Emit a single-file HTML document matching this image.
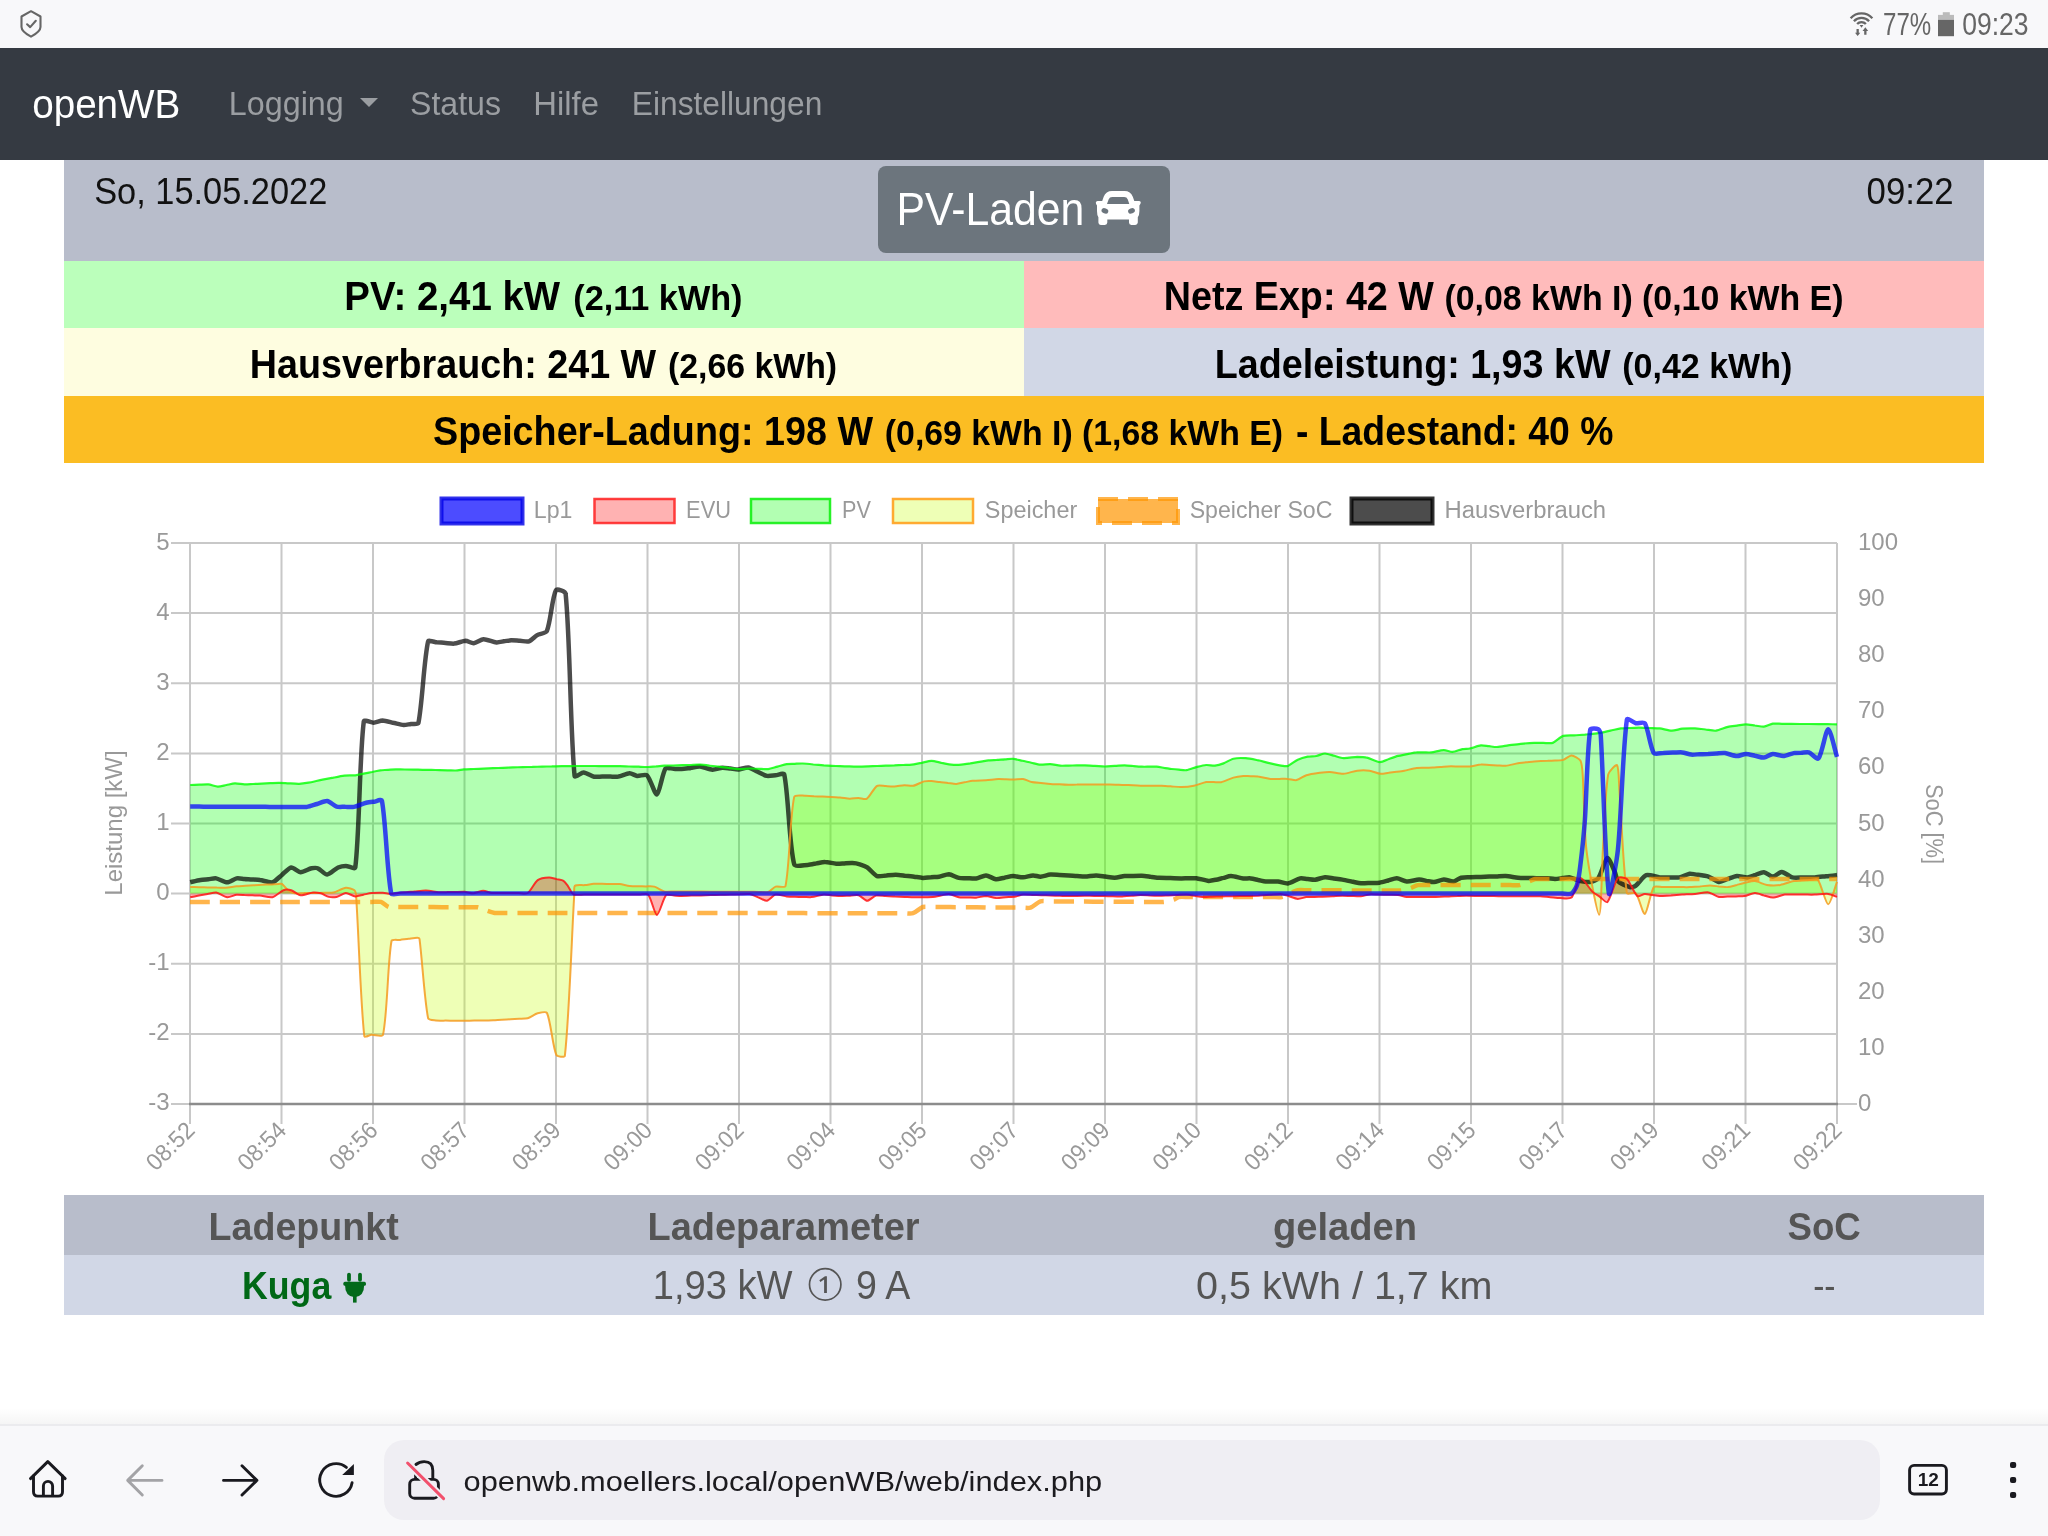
<!DOCTYPE html>
<html><head><meta charset="utf-8">
<style>
html,body{margin:0;padding:0;width:2048px;height:1536px;overflow:hidden;background:#fff;font-family:"Liberation Sans",sans-serif;}
.abs{position:absolute;}
#status{left:0;top:0;width:2048px;height:48px;background:#f8f8fa;}
#nav{left:0;top:48px;width:2048px;height:112px;background:#353a42;}
.t{position:absolute;white-space:nowrap;line-height:1;}
#hdr{left:64px;top:160px;width:1920px;height:101px;background:#b8bdcb;}
#btn{left:878px;top:166px;width:292px;height:87px;background:#6c757d;border-radius:8px;}
.row{position:absolute;height:67px;}
#bottom{left:0;top:1424px;width:2048px;height:110px;background:#f8f8fa;border-top:2px solid #ebebee;}
#shadow{left:0;top:1408px;width:2048px;height:16px;background:linear-gradient(rgba(0,0,0,0),rgba(0,0,0,0.04));}
#url{left:384px;top:1440px;width:1496px;height:80px;background:#efeef3;border-radius:20px;}
</style></head>
<body>
<div id="status" class="abs"></div>
<div id="nav" class="abs"></div>
<div id="hdr" class="abs"></div>
<div id="btn" class="abs"></div>
<div class="row" style="left:64px;top:261px;width:960px;background:#bbffbb"></div>
<div class="row" style="left:1024px;top:261px;width:960px;background:#ffbbbb"></div>
<div class="row" style="left:64px;top:328px;width:960px;height:68px;background:#fefde0"></div>
<div class="row" style="left:1024px;top:328px;width:960px;height:68px;background:#d1d7e6"></div>
<div class="row" style="left:64px;top:396px;width:1920px;background:#fbbd23"></div>
<div class="row" style="left:64px;top:1195px;width:1920px;height:60px;background:#b8bdcb"></div>
<div class="row" style="left:64px;top:1255px;width:1920px;height:60px;background:#d1d7e6"></div>
<div id="shadow" class="abs"></div><div id="bottom" class="abs"></div>
<div id="url" class="abs"></div>
<svg class="abs" style="left:0;top:0;will-change:transform" width="2048" height="1536" font-family="Liberation Sans"><text transform="translate(1883.02 34.9) scale(0.7808 1)" font-size="30.86" font-weight="400" fill="#666">77%</text>
<text transform="translate(1962.14 34.9) scale(0.8593 1)" font-size="30.86" font-weight="400" fill="#666">09:23</text>
<text transform="translate(32.23 118.2) scale(0.9652 1)" font-size="40.0" font-weight="400" fill="#fff">openWB</text>
<text transform="translate(228.87 115.3) scale(0.9656 1)" font-size="33.43" font-weight="400" fill="#9b9ea2">Logging</text>
<text transform="translate(410.04 115.3) scale(0.9598 1)" font-size="33.43" font-weight="400" fill="#9b9ea2">Status</text>
<text transform="translate(533.23 115.3) scale(0.9833 1)" font-size="33.43" font-weight="400" fill="#9b9ea2">Hilfe</text>
<text transform="translate(631.85 115.3) scale(0.9491 1)" font-size="33.43" font-weight="400" fill="#9b9ea2">Einstellungen</text>
<text transform="translate(94.15 204.1) scale(0.9474 1)" font-size="36.29" font-weight="400" fill="#111">So, 15.05.2022</text>
<text transform="translate(1866.54 204.0) scale(0.9592 1)" font-size="36.29" font-weight="400" fill="#111">09:22</text>
<text transform="translate(896.51 225.0) scale(0.9299 1)" font-size="46.0" font-weight="400" fill="#fff">PV-Laden</text>
<text transform="translate(344.37 310) scale(0.9409 1)" font-size="40.86" font-weight="700" fill="#000">PV: 2,41 kW</text>
<text transform="translate(573.24 310) scale(0.9588 1)" font-size="35.71" font-weight="700" fill="#000">(2,11 kWh)</text>
<text transform="translate(1163.76 310) scale(0.9224 1)" font-size="40.86" font-weight="700" fill="#000">Netz Exp: 42 W</text>
<text transform="translate(1444.45 310) scale(0.9489 1)" font-size="35.71" font-weight="700" fill="#000">(0,08 kWh I) (0,10 kWh E)</text>
<text transform="translate(249.86 378) scale(0.9224 1)" font-size="40.86" font-weight="700" fill="#000">Hausverbrauch: 241 W</text>
<text transform="translate(668.05 378) scale(0.9467 1)" font-size="35.71" font-weight="700" fill="#000">(2,66 kWh)</text>
<text transform="translate(1214.76 378) scale(0.9224 1)" font-size="40.86" font-weight="700" fill="#000">Ladeleistung: 1,93 kW</text>
<text transform="translate(1622.25 378) scale(0.9521 1)" font-size="35.71" font-weight="700" fill="#000">(0,42 kWh)</text>
<text transform="translate(432.98 445) scale(0.9231 1)" font-size="40.86" font-weight="700" fill="#000">Speicher-Ladung: 198 W</text>
<text transform="translate(884.85 445) scale(0.9467 1)" font-size="35.71" font-weight="700" fill="#000">(0,69 kWh I) (1,68 kWh E)</text>
<text transform="translate(1295.99 445) scale(0.9143 1)" font-size="40.86" font-weight="700" fill="#000">- Ladestand: 40 %</text>
<text transform="translate(533.85 517.9) scale(0.9536 1)" font-size="24.29" font-weight="400" fill="#999">Lp1</text>
<text transform="translate(686.10 517.9) scale(0.8989 1)" font-size="24.29" font-weight="400" fill="#999">EVU</text>
<text transform="translate(842.11 517.9) scale(0.8914 1)" font-size="24.29" font-weight="400" fill="#999">PV</text>
<text transform="translate(984.84 517.9) scale(0.9636 1)" font-size="24.29" font-weight="400" fill="#999">Speicher</text>
<text transform="translate(1189.65 517.9) scale(0.9529 1)" font-size="24.29" font-weight="400" fill="#999">Speicher SoC</text>
<text transform="translate(1444.52 517.9) scale(0.9812 1)" font-size="24.29" font-weight="400" fill="#999">Hausverbrauch</text>
<text transform="translate(208.50 1239.5) scale(0.9481 1)" font-size="39.71" font-weight="700" fill="#555">Ladepunkt</text>
<text transform="translate(647.49 1239.5) scale(0.9560 1)" font-size="39.71" font-weight="700" fill="#555">Ladeparameter</text>
<text transform="translate(1273.04 1239.5) scale(0.9593 1)" font-size="39.71" font-weight="700" fill="#555">geladen</text>
<text transform="translate(1787.48 1239.5) scale(0.9237 1)" font-size="39.71" font-weight="700" fill="#555">SoC</text>
<text transform="translate(242.00 1299) scale(0.8994 1)" font-size="39.71" font-weight="700" fill="#006816">Kuga</text>
<text transform="translate(652.83 1298.8) scale(0.9562 1)" font-size="39.86" font-weight="400" fill="#555">1,93 kW</text>
<text transform="translate(856.06 1298.8) scale(0.9419 1)" font-size="39.86" font-weight="400" fill="#555">9 A</text>
<text transform="translate(1196.00 1299) scale(0.9953 1)" font-size="39.71" font-weight="400" fill="#555">0,5 kWh / 1,7 km</text>
<text transform="translate(1813.15 1299) scale(0.8464 1)" font-size="39.71" font-weight="400" fill="#555">--</text>
<text transform="translate(463.58 1490.9) scale(1.1233 1)" font-size="27.43" font-weight="400" fill="#1c1b1f">openwb.moellers.local/openWB/web/index.php</text>
<g fill="none" stroke="#666" stroke-width="2.1" stroke-linejoin="round" stroke-linecap="round">
<path d="M31 11.2 L21.5 16.5 V27 Q21.5 31.5 31 36.7 Q40.5 31.5 40.5 27 V16.5 Z"/>
<path d="M27.1 24.3 L30.2 27.1 L35.8 20.8"/>
</g>
<g fill="none" stroke="#666" stroke-width="2.3" stroke-linecap="butt">
<path d="M1850.65 18.23 A14.6 14.6 0 0 1 1872.35 18.23"/><path d="M1853.92 21.17 A10.2 10.2 0 0 1 1869.08 21.17"/><path d="M1857.12 24.05 A5.9 5.9 0 0 1 1865.88 24.05"/>
</g>
<g fill="#666">
<path d="M1859.6 25 L1863.4 25 L1861.5 27.8 Z"/>
<path d="M1856.5 29 H1858.8 V32.8 H1860.3 L1857.65 36 L1855 32.8 H1856.5 Z"/>
<path d="M1864.2 34.8 H1866.5 V31 H1868.2 L1865.35 27.2 L1862.5 31 H1864.2 Z"/>
<rect x="1942.8" y="12.2" width="7" height="3" fill="#bbb"/>
<rect x="1938" y="14.9" width="16" height="4.9" fill="#bbb"/>
<rect x="1938" y="19.8" width="16" height="16.4"/>
</g>
<path d="M360 98 H378 L369 107 Z" fill="#9b9ea2"/>
<path fill="#fff" fill-rule="evenodd" d="M1097 205.5 Q1095.8 204.3 1095.8 202.6 Q1096 201 1097.6 201 L1102.2 201 L1103.7 196.8 Q1105.9 191 1112 191 L1124.5 191 Q1130.6 191 1132.8 196.8 L1134.3 201 L1139.2 201 Q1140.8 201 1140.8 202.6 Q1140.6 204.3 1139.4 205.5 Q1139.4 207.5 1139.4 211 Q1139.4 215.3 1137.8 217.3 L1137.8 222.6 Q1137.6 225 1135.2 225 L1131.4 225 Q1129 225 1129 222.6 L1129 219.4 L1107.3 219.4 L1107.3 222.6 Q1107.2 225 1104.8 225 L1100.8 225 Q1098.4 225 1098.4 222.6 L1098.4 217.3 Q1097 215.3 1097 211 Q1097 207.5 1097 205.5 Z M1107 203.9 L1108.6 199.5 Q1109.6 197.1 1112.2 197.1 L1124.2 197.1 Q1126.8 197.1 1127.8 199.5 L1129.3 203.9 Z"/>
<ellipse cx="1104.9" cy="210.9" rx="3.5" ry="2.6" transform="rotate(22 1104.9 210.9)" fill="#6c757d"/>
<ellipse cx="1131.5" cy="210.9" rx="3.5" ry="2.6" transform="rotate(-22 1131.5 210.9)" fill="#6c757d"/>
<g fill="#036a1a">
<rect x="347.1" y="1272.7" width="3.8" height="9" rx="1.9"/>
<rect x="358.1" y="1272.7" width="3.8" height="9" rx="1.9"/>
<rect x="343.4" y="1281.8" width="22.5" height="4" rx="1.5"/>
<path d="M345 1285 H364.2 Q364.2 1296.5 354.6 1297.2 Q345 1296.5 345 1285 Z"/>
<rect x="353" y="1295" width="3.6" height="7.6"/>
</g>
<g fill="none" stroke="#555" stroke-width="1.7"><circle cx="825.2" cy="1284.4" r="15.7"/></g>
<path d="M819.3 1280.2 L825 1276.3 H826.9 V1293.1 H824.1 V1279.6 L820.4 1282 Z" fill="#555"/>
<g fill="none" stroke="#1a1a1f" stroke-width="2.9" stroke-linejoin="round" stroke-linecap="round">
<path d="M30.5 1478.6 L47.8 1461.6 L65.2 1478.6"/>
<path d="M33.5 1476 V1491.8 Q33.5 1496.1 37.8 1496.1 H58.2 Q62.5 1496.1 62.5 1491.8 V1476"/>
<path d="M43.4 1496 V1486 A4.6 4.6 0 0 1 52.6 1486 V1496" stroke-linecap="butt"/>
<path d="M256.9 1480.4 H223.5 M242 1465.8 L256.9 1480.4 L242 1495"/>
<path d="M346.4 1467.4 A16.3 16.3 0 1 0 352.1 1482.7"/>
<path d="M415.9 1464.5 Q419.5 1461.6 424.2 1461.6 Q432.8 1461.6 432.8 1470.5 V1478.5"/>
<path d="M415.6 1472.3 V1478.5"/>
<rect x="409.7" y="1479.4" width="28.7" height="18.8" rx="4.8"/>
<rect x="1909.6" y="1465.4" width="36.8" height="28.6" rx="4.5"/>
</g>
<path d="M162 1480.4 H128.6 M142.3 1465.8 L127.7 1480.4 L142.3 1495" fill="none" stroke="#a3a3a6" stroke-width="2.9" stroke-linejoin="round" stroke-linecap="round"/>
<path d="M342.2 1475.1 L353.9 1464.1 V1475.1 Z" fill="#1a1a1f"/>
<path d="M405 1460.5 L446.5 1501.2" stroke="#efeef3" stroke-width="7"/>
<path d="M407.6 1463 L443.6 1498.6" stroke="#f2506c" stroke-width="3" stroke-linecap="round"/>
<text x="1928.2" y="1485.9" font-size="19" font-weight="700" fill="#1a1a1f" text-anchor="middle">12</text>
<g fill="#1a1a1f">
<rect x="2010" y="1462" width="6.2" height="6" rx="2"/>
<rect x="2010" y="1477" width="6.2" height="6" rx="2"/>
<rect x="2010" y="1492" width="6.2" height="6" rx="2"/>
</g>
</svg>
<svg class="abs" style="left:0;top:0;will-change:transform" width="2048" height="1536" font-family="Liberation Sans"><g stroke="#c8c8c8" stroke-width="2"><line x1="171" y1="543.00" x2="1837" y2="543.00"/><line x1="171" y1="613.12" x2="1837" y2="613.12"/><line x1="171" y1="683.25" x2="1837" y2="683.25"/><line x1="171" y1="753.38" x2="1837" y2="753.38"/><line x1="171" y1="823.50" x2="1837" y2="823.50"/><line x1="171" y1="893.62" x2="1837" y2="893.62"/><line x1="171" y1="963.75" x2="1837" y2="963.75"/><line x1="171" y1="1033.88" x2="1837" y2="1033.88"/><line x1="190.0" y1="543" x2="190.0" y2="1124"/><line x1="281.5" y1="543" x2="281.5" y2="1124"/><line x1="373.0" y1="543" x2="373.0" y2="1124"/><line x1="464.5" y1="543" x2="464.5" y2="1124"/><line x1="556.0" y1="543" x2="556.0" y2="1124"/><line x1="647.5" y1="543" x2="647.5" y2="1124"/><line x1="739.0" y1="543" x2="739.0" y2="1124"/><line x1="830.5" y1="543" x2="830.5" y2="1124"/><line x1="922.0" y1="543" x2="922.0" y2="1124"/><line x1="1013.5" y1="543" x2="1013.5" y2="1124"/><line x1="1105.0" y1="543" x2="1105.0" y2="1124"/><line x1="1196.5" y1="543" x2="1196.5" y2="1124"/><line x1="1288.0" y1="543" x2="1288.0" y2="1124"/><line x1="1379.5" y1="543" x2="1379.5" y2="1124"/><line x1="1471.0" y1="543" x2="1471.0" y2="1124"/><line x1="1562.5" y1="543" x2="1562.5" y2="1124"/><line x1="1654.0" y1="543" x2="1654.0" y2="1124"/><line x1="1745.5" y1="543" x2="1745.5" y2="1124"/><line x1="1837.0" y1="543" x2="1837.0" y2="1124"/><line x1="171" y1="1104" x2="190" y2="1104"/><line x1="1837" y1="1104" x2="1857" y2="1104"/></g>
<path d="M190.2 887.0 C192.4 887.0 196.8 887.2 199.0 887.2 C201.3 887.2 205.7 887.4 207.9 887.4 C210.1 887.4 214.5 887.5 216.8 887.6 C219.0 887.6 223.4 887.9 225.6 887.8 C228.4 887.6 233.8 886.5 236.6 886.2 C238.7 886.0 242.9 885.9 245.0 885.8 C247.1 885.7 251.4 885.4 253.5 885.3 C255.6 885.2 259.8 885.0 261.9 884.8 C264.0 884.7 268.2 884.5 270.3 884.4 C272.4 884.3 276.6 884.0 278.8 883.9 C279.5 883.9 281.3 883.5 281.9 883.9 C283.6 885.1 286.4 888.9 288.1 890.2 C289.5 891.2 292.7 893.0 294.4 893.3 C296.7 893.7 301.7 893.1 304.1 893.1 C306.6 893.0 311.5 892.9 313.9 892.9 C316.3 892.9 321.2 892.8 323.6 892.7 C326.1 892.7 331.1 893.0 333.4 892.5 C336.6 891.8 342.7 888.1 345.9 887.8 C348.0 887.6 352.9 889.0 354.5 890.2 C355.5 891.0 356.0 894.2 356.1 895.6 C358.5 930.7 360.6 1003.1 364.3 1036.2 C364.5 1037.9 369.7 1034.9 371.5 1034.8 C374.4 1034.6 382.5 1037.4 383.0 1034.8 C387.5 1013.9 387.6 962.7 391.5 941.0 C391.9 939.0 397.9 940.2 400.1 939.9 C402.2 939.6 406.6 939.1 408.7 938.8 C410.9 938.5 415.2 937.7 417.3 937.7 C417.9 937.7 419.4 938.2 419.5 938.8 C422.1 958.3 424.4 999.8 428.1 1018.3 C428.5 1020.2 434.0 1020.2 436.0 1020.5 C438.3 1020.8 443.2 1020.6 445.5 1020.6 C447.9 1020.6 452.7 1020.7 455.1 1020.7 C457.4 1020.7 462.2 1020.8 464.6 1020.8 C467.0 1020.8 471.8 1020.6 474.2 1020.6 C476.6 1020.6 481.3 1020.4 483.7 1020.4 C486.1 1020.4 490.9 1020.3 493.3 1020.2 C495.5 1020.1 499.8 1019.8 501.9 1019.7 C504.1 1019.6 508.4 1019.4 510.5 1019.2 C512.6 1019.1 517.0 1018.9 519.1 1018.8 C521.2 1018.7 525.7 1018.9 527.7 1018.3 C530.3 1017.5 535.1 1014.0 537.7 1013.3 C539.9 1012.7 546.2 1011.1 547.0 1013.0 C550.8 1021.5 552.6 1046.0 556.3 1054.9 C557.0 1056.7 564.7 1057.6 564.9 1055.6 C569.1 1017.9 571.8 935.7 574.2 895.8 C574.3 893.3 573.6 887.1 574.9 885.8 C576.3 884.5 582.5 885.4 585.0 885.1 C587.2 884.9 591.4 883.9 593.6 883.7 C595.8 883.5 600.1 883.8 602.3 883.8 C604.5 883.9 608.8 883.9 611.0 884.0 C613.2 884.0 617.5 883.9 619.7 884.1 C622.2 884.4 627.1 885.7 629.6 886.0 C631.6 886.2 635.8 886.2 637.9 886.2 C639.9 886.2 644.1 886.4 646.1 886.4 C648.2 886.4 652.5 886.1 654.4 886.6 C657.0 887.3 661.7 890.8 664.3 891.5 C666.5 892.1 671.4 891.5 673.7 891.5 C676.1 891.5 680.8 891.6 683.2 891.6 C685.6 891.6 690.3 891.6 692.6 891.6 C695.0 891.6 699.7 891.6 702.1 891.6 C704.4 891.7 709.2 891.7 711.5 891.7 C713.9 891.7 718.6 891.7 721.0 891.7 C723.3 891.7 728.1 891.7 730.4 891.8 C732.8 891.8 737.5 891.8 739.9 891.8 C742.2 891.8 746.9 891.8 749.3 891.8 C751.7 891.8 756.4 891.9 758.8 891.9 C761.1 891.9 766.1 892.6 768.2 891.9 C770.3 891.3 773.5 887.3 775.6 886.6 C777.9 885.8 785.0 888.2 785.5 886.0 C789.7 865.8 789.8 817.0 794.2 796.9 C794.7 794.4 802.5 795.8 805.3 795.7 C807.5 795.6 811.8 796.0 814.0 796.2 C816.1 796.3 820.5 796.5 822.6 796.6 C824.8 796.7 829.2 796.9 831.3 797.0 C833.5 797.2 837.8 797.3 840.0 797.5 C842.5 797.7 847.4 798.7 849.9 798.8 C852.1 798.8 856.4 797.9 858.6 797.9 C860.6 797.9 865.1 799.8 866.6 798.8 C869.7 796.8 873.9 787.9 877.1 785.8 C878.7 784.7 883.6 786.0 885.8 786.1 C887.9 786.2 892.2 786.5 894.4 786.4 C896.9 786.3 901.8 785.3 904.3 785.2 C906.5 785.1 910.9 786.2 913.0 785.8 C915.9 785.3 921.2 782.1 924.1 781.4 C925.9 781.0 929.7 781.0 931.5 781.1 C933.6 781.2 937.7 781.8 939.8 782.0 C941.8 782.3 946.0 782.7 948.0 783.0 C950.1 783.2 954.2 784.0 956.3 783.9 C958.3 783.8 962.3 782.7 964.3 782.3 C966.4 782.0 970.4 781.0 972.4 780.8 C975.8 780.5 982.6 780.4 986.0 780.2 C989.1 780.0 995.2 779.1 998.3 779.0 C1000.2 778.9 1003.9 779.2 1005.8 779.3 C1007.6 779.4 1011.3 779.6 1013.2 779.6 C1015.7 779.6 1020.7 778.7 1023.1 779.0 C1025.3 779.3 1029.5 781.6 1031.7 782.1 C1034.0 782.6 1038.7 782.8 1041.0 783.0 C1043.3 783.2 1048.0 783.7 1050.3 783.9 C1052.6 784.1 1057.2 784.2 1059.5 784.3 C1061.9 784.5 1066.5 784.8 1068.8 784.8 C1070.8 784.8 1074.9 784.6 1076.9 784.6 C1078.9 784.5 1083.0 784.4 1085.0 784.4 C1087.1 784.4 1091.2 784.4 1093.2 784.4 C1095.3 784.4 1099.4 784.4 1101.5 784.4 C1103.5 784.4 1107.6 784.4 1109.7 784.4 C1112.0 784.4 1116.7 784.6 1119.0 784.7 C1121.3 784.8 1126.0 785.0 1128.3 785.0 C1130.6 785.1 1135.3 785.3 1137.6 785.4 C1139.9 785.5 1144.6 785.7 1146.9 785.7 C1148.7 785.7 1152.5 785.7 1154.3 785.7 C1156.2 785.7 1159.9 785.6 1161.7 785.7 C1164.2 785.8 1169.1 786.2 1171.6 786.4 C1174.1 786.6 1179.0 787.2 1181.5 787.1 C1184.6 787.0 1190.9 786.3 1193.9 785.7 C1197.0 785.1 1203.1 782.6 1206.2 782.0 C1208.0 781.7 1211.8 782.1 1213.7 782.1 C1215.5 782.1 1219.3 782.6 1221.1 782.2 C1224.3 781.5 1230.3 778.5 1233.4 777.6 C1235.8 776.9 1240.8 776.2 1243.3 776.0 C1245.1 775.9 1248.9 776.2 1250.8 776.2 C1252.6 776.2 1256.4 776.1 1258.2 776.4 C1261.3 776.8 1267.4 778.5 1270.5 778.9 C1272.6 779.2 1277.0 778.9 1279.2 778.9 C1281.4 778.9 1285.7 778.7 1287.9 778.9 C1290.1 779.0 1294.5 780.5 1296.5 780.1 C1299.1 779.6 1303.8 776.0 1306.4 775.2 C1309.7 774.2 1316.6 773.2 1320.0 772.7 C1322.5 772.4 1327.5 771.9 1330.0 772.0 C1333.4 772.2 1340.2 774.0 1343.6 773.8 C1347.0 773.6 1353.8 771.1 1357.2 770.7 C1360.3 770.3 1366.6 770.3 1369.6 770.7 C1372.4 771.1 1377.9 773.5 1380.7 773.8 C1382.6 774.0 1386.6 773.0 1388.5 772.8 C1390.5 772.5 1394.4 772.0 1396.4 771.7 C1398.3 771.5 1402.3 771.1 1404.2 770.7 C1407.3 770.1 1413.5 768.4 1416.6 768.0 C1418.6 767.7 1422.6 767.8 1424.7 767.8 C1426.7 767.8 1430.7 767.7 1432.7 767.6 C1434.6 767.5 1438.2 767.1 1440.1 767.0 C1441.9 766.9 1445.6 766.5 1447.5 766.4 C1450.3 766.3 1455.9 766.4 1458.7 766.4 C1461.4 766.4 1467.0 766.6 1469.8 766.4 C1472.6 766.2 1478.1 764.7 1480.9 764.5 C1483.0 764.3 1487.1 764.8 1489.2 764.9 C1491.2 765.0 1495.4 765.3 1497.4 765.4 C1499.5 765.5 1503.7 766.0 1505.7 765.8 C1508.8 765.5 1514.9 763.8 1518.0 763.3 C1520.0 763.0 1524.0 762.6 1526.0 762.3 C1528.1 762.1 1532.1 761.5 1534.1 761.4 C1537.5 761.2 1544.3 760.9 1547.7 760.8 C1549.5 760.7 1553.2 760.7 1555.0 760.6 C1557.1 760.5 1561.3 760.5 1563.2 759.9 C1565.4 759.2 1569.4 755.3 1571.5 755.4 C1573.7 755.5 1579.2 758.6 1580.4 760.6 C1582.0 763.4 1582.5 771.3 1582.7 774.9 C1584.0 793.6 1584.2 831.2 1586.4 849.7 C1588.3 866.1 1597.1 914.8 1599.2 914.8 C1601.2 914.8 1601.9 866.0 1602.9 849.7 C1604.1 831.0 1605.1 792.9 1608.1 774.9 C1608.6 771.7 1616.1 763.8 1617.1 765.1 C1618.9 767.5 1618.9 783.6 1619.4 789.8 C1621.4 815.6 1623.1 869.3 1626.9 893.1 C1627.2 895.1 1634.5 891.6 1635.8 893.1 C1639.0 896.9 1642.8 914.8 1644.8 914.1 C1647.3 913.3 1650.4 892.2 1653.8 887.1 C1654.9 885.5 1660.5 887.1 1662.8 887.1 C1665.0 887.1 1669.5 887.1 1671.8 887.1 C1674.0 887.1 1678.5 887.1 1680.7 887.1 C1683.0 887.1 1687.5 887.2 1689.7 887.1 C1692.2 887.0 1697.3 886.5 1699.8 886.4 C1702.4 886.2 1707.5 885.6 1710.0 885.6 C1712.2 885.6 1716.7 886.2 1719.0 886.4 C1721.2 886.5 1725.7 887.3 1727.9 887.1 C1730.2 886.9 1734.7 885.4 1736.9 884.9 C1739.2 884.3 1743.6 883.1 1745.9 882.6 C1748.1 882.1 1752.7 880.9 1754.9 881.1 C1757.9 881.4 1763.8 884.4 1766.9 884.9 C1770.2 885.4 1777.0 885.4 1780.3 884.9 C1783.7 884.4 1790.4 881.8 1793.8 881.1 C1795.8 880.7 1799.8 880.7 1801.8 880.6 C1803.8 880.5 1807.8 880.2 1809.8 880.1 C1811.8 880.0 1816.7 878.2 1817.8 879.6 C1821.3 884.3 1825.7 904.0 1828.2 904.3 C1830.5 904.6 1834.8 887.5 1837.0 881.9 L1837.0 893.5 L190.2 893.5 Z" fill="rgba(200,255,13,0.30)"/>
<path d="M190.2 785.0 C192.5 784.9 197.0 784.8 199.3 784.7 C201.6 784.6 206.2 784.2 208.4 784.4 C210.8 784.6 215.4 786.5 217.8 786.6 C219.9 786.7 224.2 785.4 226.4 785.0 C228.6 784.6 232.8 783.5 235.0 783.4 C237.3 783.3 242.0 784.3 244.4 784.4 C246.5 784.5 250.8 784.1 253.0 784.0 C255.1 783.9 259.4 783.7 261.6 783.6 C263.7 783.5 268.0 783.3 270.2 783.2 C272.3 783.1 276.6 782.8 278.8 782.8 C281.3 782.8 286.4 783.2 288.9 783.3 C291.5 783.5 296.6 784.0 299.1 783.9 C301.4 783.8 306.1 783.1 308.4 782.7 C310.2 782.4 313.7 781.6 315.4 781.2 C317.2 780.8 320.7 780.0 322.5 779.7 C325.2 779.2 330.7 778.2 333.4 777.7 C336.2 777.1 341.6 775.9 344.4 775.6 C347.1 775.3 352.6 775.6 355.3 775.3 C357.4 775.1 361.6 774.0 363.6 773.6 C365.7 773.2 369.9 772.4 372.0 772.0 C374.1 771.5 378.2 770.6 380.3 770.3 C382.2 770.0 386.2 770.0 388.1 769.8 C390.1 769.7 393.9 769.4 395.9 769.4 C398.1 769.4 402.6 769.5 404.8 769.5 C407.0 769.6 411.4 769.6 413.6 769.6 C415.9 769.7 420.3 769.7 422.5 769.8 C424.7 769.8 429.2 769.9 431.4 769.9 C433.4 769.9 437.5 770.1 439.5 770.1 C441.6 770.1 445.6 770.2 447.7 770.3 C449.7 770.3 453.8 770.6 455.8 770.5 C457.8 770.4 461.9 769.6 463.9 769.4 C466.3 769.2 471.2 769.1 473.7 769.0 C476.1 768.9 481.0 768.7 483.5 768.6 C485.9 768.5 490.8 768.3 493.2 768.2 C495.7 768.1 500.6 767.9 503.0 767.8 C505.5 767.7 510.4 767.5 512.8 767.4 C515.2 767.3 520.1 767.2 522.6 767.1 C525.0 767.1 529.9 766.9 532.3 766.9 C534.8 766.8 539.6 766.7 542.1 766.6 C544.5 766.6 549.4 766.4 551.8 766.4 C554.3 766.3 559.2 766.1 561.6 766.1 C563.7 766.1 567.9 766.1 570.0 766.1 C572.0 766.1 576.2 766.1 578.3 766.0 C580.4 766.0 584.6 766.0 586.6 766.0 C588.7 766.0 592.9 766.0 595.0 766.0 C597.1 766.0 601.2 766.1 603.2 766.1 C605.3 766.1 609.4 766.1 611.5 766.1 C613.5 766.1 617.6 766.2 619.7 766.2 C622.1 766.2 626.8 766.4 629.2 766.5 C631.6 766.5 636.3 766.7 638.7 766.7 C641.1 766.8 645.8 767.1 648.2 767.0 C650.2 767.0 654.2 766.5 656.2 766.4 C658.3 766.2 662.3 765.8 664.3 765.7 C666.5 765.6 671.0 765.5 673.2 765.5 C675.5 765.4 680.0 765.3 682.2 765.2 C684.4 765.1 688.9 765.0 691.1 765.0 C693.4 764.9 697.9 764.6 700.1 764.7 C702.4 764.8 707.1 765.4 709.4 765.7 C711.7 765.9 716.4 766.3 718.7 766.6 C721.2 766.9 726.1 767.5 728.6 767.9 C731.1 768.2 736.0 769.0 738.5 769.1 C741.3 769.2 746.8 768.5 749.6 768.5 C751.9 768.5 756.6 768.7 758.9 768.8 C761.2 768.9 765.9 769.4 768.2 769.1 C770.6 768.8 775.1 767.2 777.5 766.6 C779.8 766.0 784.4 764.5 786.7 764.1 C788.7 763.8 792.7 763.9 794.8 763.8 C796.8 763.7 800.8 763.4 802.8 763.5 C805.4 763.6 810.7 764.2 813.3 764.5 C815.9 764.7 821.2 765.2 823.8 765.4 C825.8 765.5 829.9 765.7 831.9 765.8 C833.9 765.9 838.0 766.1 840.0 766.2 C842.3 766.3 847.0 766.4 849.3 766.4 C851.6 766.5 856.3 766.6 858.6 766.6 C860.9 766.6 865.5 766.4 867.9 766.3 C870.2 766.2 874.8 766.1 877.1 766.0 C879.3 765.9 883.6 765.8 885.8 765.7 C887.9 765.6 892.2 765.4 894.4 765.4 C896.6 765.3 900.9 765.1 903.1 765.0 C905.2 764.9 909.6 765.0 911.7 764.7 C914.2 764.4 919.1 763.2 921.6 762.8 C924.1 762.3 929.0 760.8 931.5 760.8 C934.0 760.8 938.9 762.3 941.4 762.8 C943.9 763.2 948.8 764.5 951.3 764.7 C953.8 764.9 958.7 764.9 961.2 764.7 C963.5 764.5 968.0 763.6 970.3 763.3 C972.5 762.9 977.1 762.2 979.3 761.8 C981.6 761.5 986.1 760.7 988.4 760.4 C990.5 760.2 994.6 760.0 996.7 759.9 C998.7 759.7 1002.9 759.5 1004.9 759.3 C1007.0 759.2 1011.2 758.6 1013.2 758.8 C1015.5 759.0 1020.0 760.3 1022.3 760.8 C1024.5 761.3 1029.1 762.2 1031.3 762.7 C1033.6 763.2 1038.1 764.5 1040.4 764.7 C1042.8 764.9 1047.8 764.0 1050.3 764.1 C1052.8 764.2 1057.7 765.5 1060.2 765.7 C1062.3 765.9 1066.4 765.6 1068.5 765.6 C1070.5 765.5 1074.7 765.5 1076.7 765.4 C1078.8 765.4 1082.9 765.2 1085.0 765.3 C1087.5 765.4 1092.4 765.8 1094.9 765.9 C1097.4 766.0 1102.3 766.5 1104.8 766.5 C1107.3 766.5 1112.2 766.0 1114.7 765.9 C1117.2 765.8 1122.1 765.3 1124.6 765.3 C1126.8 765.3 1131.1 765.8 1133.2 766.0 C1135.4 766.2 1139.7 766.6 1141.9 766.7 C1143.7 766.8 1147.5 766.7 1149.3 766.7 C1151.2 766.7 1154.9 766.6 1156.7 766.7 C1158.6 766.8 1162.3 767.6 1164.2 767.9 C1166.0 768.1 1169.7 768.8 1171.6 769.0 C1173.4 769.2 1177.2 769.5 1179.0 769.6 C1180.8 769.8 1184.6 770.5 1186.4 770.2 C1188.9 769.8 1193.8 767.8 1196.3 767.1 C1198.7 766.5 1203.7 765.2 1206.2 765.0 C1208.4 764.8 1212.8 765.8 1214.9 765.6 C1217.1 765.4 1221.4 764.2 1223.5 763.4 C1226.1 762.4 1230.8 759.3 1233.4 758.7 C1236.4 758.0 1242.7 758.0 1245.8 758.2 C1248.9 758.4 1255.1 759.7 1258.2 760.3 C1261.3 761.0 1267.4 762.7 1270.5 763.4 C1273.6 764.1 1279.8 765.5 1282.9 765.9 C1284.1 766.1 1286.8 766.4 1287.9 765.9 C1290.5 764.8 1295.2 760.9 1297.8 759.7 C1300.1 758.6 1305.2 757.1 1307.7 756.6 C1309.8 756.2 1314.2 756.4 1316.3 756.0 C1318.5 755.6 1322.8 753.5 1325.0 753.5 C1327.3 753.5 1332.0 755.2 1334.3 755.8 C1336.6 756.4 1341.2 758.0 1343.6 758.1 C1347.0 758.3 1353.8 757.0 1357.2 756.9 C1359.7 756.9 1364.7 757.1 1367.1 757.7 C1370.4 758.4 1376.7 761.9 1379.9 762.1 C1382.2 762.2 1386.7 759.8 1389.0 759.0 C1391.2 758.2 1395.7 756.5 1398.0 755.9 C1400.3 755.3 1405.0 754.6 1407.3 754.1 C1409.6 753.7 1414.3 752.6 1416.6 752.4 C1418.4 752.2 1422.2 752.4 1424.0 752.4 C1425.8 752.4 1429.6 752.6 1431.4 752.4 C1434.5 752.0 1440.7 750.2 1443.8 750.1 C1446.0 750.0 1450.3 752.0 1452.5 751.9 C1455.0 751.8 1459.9 749.6 1462.4 749.1 C1464.2 748.7 1468.0 748.9 1469.8 748.5 C1472.6 747.9 1478.1 745.7 1480.9 745.4 C1482.9 745.2 1486.9 746.0 1489.0 746.2 C1491.0 746.4 1495.0 747.1 1497.0 747.0 C1499.8 746.9 1505.3 745.8 1508.1 745.4 C1511.2 745.0 1517.4 744.1 1520.5 743.8 C1523.9 743.5 1530.7 743.0 1534.1 742.9 C1536.4 742.8 1541.1 742.9 1543.4 742.9 C1545.7 742.9 1550.6 743.6 1552.7 742.9 C1555.5 741.9 1560.3 736.9 1563.2 735.9 C1565.7 735.0 1571.3 735.4 1574.1 735.3 C1576.8 735.1 1582.2 734.9 1584.9 734.7 C1586.8 734.5 1590.5 734.0 1592.4 733.8 C1594.3 733.6 1598.0 733.2 1599.9 732.9 C1602.5 732.4 1607.8 731.2 1610.4 730.6 C1613.0 730.1 1618.2 728.8 1620.9 728.4 C1623.1 728.1 1627.6 728.1 1629.8 728.0 C1632.1 728.0 1636.6 727.7 1638.8 727.7 C1641.4 727.7 1646.7 728.0 1649.3 728.0 C1651.9 728.1 1657.2 728.1 1659.8 728.4 C1662.8 728.8 1668.8 730.7 1671.8 730.7 C1674.4 730.7 1679.6 729.0 1682.2 728.7 C1685.4 728.4 1691.8 728.3 1695.0 728.4 C1697.6 728.5 1702.9 729.3 1705.5 729.5 C1708.1 729.8 1713.4 731.0 1716.0 730.7 C1719.0 730.3 1724.9 727.6 1727.9 726.9 C1730.1 726.4 1734.7 725.9 1736.9 725.6 C1739.2 725.3 1743.6 724.3 1745.9 724.3 C1748.1 724.3 1752.7 725.2 1754.9 725.5 C1757.2 725.7 1761.7 726.8 1763.9 726.6 C1766.2 726.4 1770.5 724.1 1772.8 723.7 C1775.0 723.4 1779.7 723.8 1782.0 723.8 C1784.3 723.8 1788.8 723.9 1791.1 723.9 C1793.4 723.9 1798.0 723.9 1800.3 724.0 C1802.6 724.0 1807.2 724.0 1809.5 724.0 C1811.8 724.1 1816.4 724.1 1818.7 724.1 C1821.0 724.1 1825.5 724.2 1827.8 724.2 C1830.1 724.2 1834.7 724.3 1837.0 724.3 L1837.0 893.5 L190.2 893.5 Z" fill="rgba(0,255,0,0.30)"/>
<path d="M190.2 897.2 C192.4 896.8 196.7 896.0 198.9 895.6 C201.1 895.2 205.4 894.5 207.6 894.1 C209.7 893.7 214.2 892.2 216.2 892.5 C219.1 893.0 224.4 896.9 227.2 897.2 C229.5 897.5 234.2 895.1 236.6 894.8 C238.5 894.6 242.5 895.0 244.4 895.1 C246.3 895.1 250.2 895.3 252.2 895.3 C254.1 895.4 258.1 895.4 260.0 895.6 C263.1 895.9 269.6 897.9 272.5 897.2 C275.5 896.5 280.5 891.3 283.4 890.2 C285.2 889.5 289.4 889.7 291.2 890.2 C293.7 890.9 298.1 895.0 300.6 895.3 C303.6 895.6 310.0 892.8 313.1 892.5 C315.0 892.3 319.0 892.8 320.9 893.3 C323.0 893.9 326.7 896.4 328.8 896.9 C330.6 897.3 334.7 897.3 336.6 896.9 C339.0 896.4 343.6 893.1 345.9 893.0 C348.2 892.9 352.9 896.2 355.3 896.4 C357.3 896.6 361.4 895.1 363.4 894.7 C365.4 894.3 369.4 893.2 371.5 893.0 C374.3 892.7 380.1 892.6 383.0 892.7 C384.8 892.8 388.3 893.7 390.1 893.7 C392.1 893.7 396.2 893.2 398.2 893.0 C400.3 892.8 404.3 892.4 406.4 892.2 C408.4 892.0 412.5 891.7 414.5 891.5 C417.4 891.2 423.1 890.3 425.9 890.4 C429.1 890.5 435.6 892.0 438.8 892.3 C440.9 892.5 445.3 892.2 447.4 892.1 C449.6 892.1 453.9 892.0 456.0 892.0 C458.1 891.9 462.5 891.6 464.6 891.8 C466.8 892.0 471.1 893.4 473.2 893.3 C475.7 893.2 480.7 890.8 483.2 890.8 C485.4 890.8 489.6 892.7 491.8 893.0 C494.0 893.3 498.5 893.0 500.8 893.0 C503.0 893.0 507.5 893.0 509.8 893.0 C512.0 893.0 516.5 893.0 518.7 893.0 C521.0 893.0 526.0 894.1 527.7 893.0 C530.8 890.9 534.6 882.4 537.7 880.1 C539.9 878.5 546.3 877.6 549.1 877.5 C550.9 877.4 554.5 878.7 556.3 879.1 C558.1 879.6 562.0 879.9 563.5 880.8 C564.9 881.6 566.8 884.5 567.8 885.8 C569.3 887.9 571.5 893.3 573.5 894.4 C575.6 895.5 581.6 894.5 584.2 894.5 C586.9 894.5 592.3 894.6 595.0 894.6 C597.2 894.6 601.6 894.6 603.9 894.6 C606.1 894.6 610.5 894.6 612.7 894.6 C615.0 894.6 619.4 894.6 621.6 894.6 C623.8 894.6 628.2 894.6 630.5 894.6 C632.7 894.6 637.1 894.6 639.3 894.6 C641.6 894.6 646.9 893.1 648.2 894.6 C651.3 898.2 654.6 914.9 656.9 915.0 C659.1 915.1 663.0 898.8 666.1 895.2 C667.2 893.9 671.9 895.5 673.9 895.5 C675.8 895.6 679.7 895.9 681.6 895.9 C684.0 895.9 688.9 895.7 691.3 895.6 C693.7 895.6 698.6 895.4 701.0 895.4 C703.5 895.3 708.3 895.2 710.7 895.1 C713.2 895.0 718.0 894.9 720.5 894.8 C722.9 894.7 727.7 894.6 730.2 894.5 C732.6 894.5 737.5 894.3 739.9 894.3 C742.3 894.2 747.3 893.6 749.6 894.0 C751.8 894.4 756.1 896.5 758.2 897.4 C760.4 898.2 764.9 901.1 766.9 900.8 C769.2 900.4 773.2 895.1 775.6 894.6 C778.1 894.0 783.9 896.2 786.7 896.5 C788.7 896.7 792.9 896.7 795.0 896.7 C797.0 896.8 801.2 896.9 803.2 896.9 C805.3 896.9 809.5 897.3 811.5 897.1 C814.6 896.8 820.7 894.9 823.8 894.6 C825.8 894.4 829.9 895.2 831.9 895.4 C833.9 895.5 838.0 896.1 840.0 896.1 C842.3 896.1 847.0 895.8 849.3 895.7 C851.6 895.5 856.5 894.6 858.6 895.2 C860.9 895.9 865.0 900.7 867.2 900.8 C869.3 900.8 873.6 896.2 875.9 895.6 C878.1 895.0 883.1 895.9 885.5 896.0 C887.9 896.1 892.7 896.3 895.0 896.5 C897.4 896.6 902.2 896.8 904.6 896.9 C907.0 897.0 911.8 897.3 914.2 897.3 C916.5 897.3 921.2 897.2 923.5 897.2 C925.8 897.2 930.5 897.3 932.8 897.1 C934.8 896.9 938.8 895.9 940.8 895.5 C942.9 895.2 946.9 893.8 948.9 894.0 C951.4 894.2 956.3 896.8 958.8 897.3 C960.9 897.7 965.3 897.4 967.5 897.5 C969.6 897.5 974.0 897.9 976.1 897.7 C978.6 897.5 983.5 895.9 986.0 895.9 C988.5 896.0 993.4 897.9 995.9 898.1 C998.3 898.3 1003.3 897.5 1005.8 897.3 C1008.3 897.1 1013.3 896.9 1015.7 896.5 C1017.6 896.2 1021.2 894.8 1023.1 894.6 C1025.4 894.4 1030.0 894.8 1032.2 894.9 C1034.5 895.0 1039.1 895.1 1041.4 895.2 C1043.7 895.3 1048.2 895.4 1050.5 895.5 C1052.8 895.6 1057.4 895.7 1059.7 895.8 C1061.9 895.9 1066.5 896.1 1068.8 896.1 C1070.8 896.1 1074.9 896.0 1076.9 896.0 C1078.9 895.9 1083.0 895.8 1085.0 895.8 C1087.3 895.8 1092.0 895.9 1094.3 895.9 C1096.6 896.0 1101.2 896.1 1103.5 896.1 C1105.9 896.1 1110.5 896.2 1112.8 896.2 C1115.1 896.3 1119.8 896.5 1122.1 896.4 C1124.4 896.3 1129.1 895.9 1131.4 895.8 C1133.7 895.6 1138.4 895.1 1140.7 895.1 C1143.0 895.1 1147.6 895.4 1150.0 895.5 C1152.3 895.5 1156.9 895.8 1159.2 895.8 C1161.5 895.8 1166.0 895.5 1168.3 895.4 C1170.5 895.3 1175.1 895.0 1177.3 894.9 C1179.6 894.8 1184.1 894.4 1186.4 894.5 C1188.4 894.6 1192.4 895.4 1194.5 895.8 C1196.5 896.1 1200.5 896.9 1202.5 897.0 C1204.8 897.1 1209.5 896.8 1211.8 896.7 C1214.1 896.6 1218.8 896.5 1221.1 896.4 C1223.4 896.3 1228.1 896.3 1230.4 896.2 C1232.7 896.2 1237.3 896.1 1239.7 896.1 C1242.0 896.1 1246.6 896.0 1248.9 895.9 C1251.2 895.9 1255.9 895.9 1258.2 895.8 C1261.0 895.6 1266.5 895.1 1269.3 894.8 C1272.1 894.6 1277.7 893.8 1280.4 893.9 C1282.3 894.0 1286.0 895.3 1287.9 895.8 C1290.4 896.5 1295.3 898.7 1297.8 898.9 C1299.9 899.0 1304.2 897.3 1306.4 897.0 C1308.4 896.8 1312.4 896.9 1314.5 896.9 C1316.5 896.8 1320.5 896.8 1322.5 896.7 C1325.0 896.6 1330.0 896.3 1332.5 896.2 C1334.9 896.1 1339.9 895.7 1342.4 895.7 C1344.7 895.7 1349.3 895.9 1351.7 896.0 C1354.0 896.1 1358.6 896.5 1360.9 896.3 C1363.1 896.1 1367.4 894.6 1369.6 894.4 C1371.9 894.2 1376.7 894.6 1379.1 894.6 C1381.4 894.6 1386.2 894.8 1388.5 894.8 C1390.9 894.8 1395.7 894.7 1398.0 895.0 C1400.2 895.3 1404.5 896.6 1406.7 896.9 C1408.7 897.1 1412.9 897.0 1414.9 897.0 C1417.0 897.0 1421.1 897.0 1423.2 897.0 C1425.2 897.0 1429.3 897.1 1431.4 897.1 C1433.6 897.1 1437.9 896.8 1440.1 896.8 C1442.2 896.7 1446.6 896.5 1448.8 896.4 C1450.9 896.3 1455.3 896.1 1457.4 896.1 C1459.6 896.0 1463.9 895.7 1466.1 895.7 C1468.4 895.7 1473.1 895.8 1475.4 895.9 C1477.7 895.9 1482.3 896.0 1484.7 896.0 C1487.0 896.0 1491.6 896.1 1493.9 896.1 C1496.2 896.2 1500.9 896.3 1503.2 896.3 C1505.5 896.3 1510.2 896.3 1512.5 896.3 C1514.8 896.3 1519.4 896.3 1521.8 896.3 C1524.1 896.3 1528.7 896.3 1531.0 896.3 C1533.3 896.3 1538.0 896.2 1540.3 896.3 C1542.8 896.4 1547.7 897.0 1550.2 897.2 C1552.7 897.4 1557.6 898.1 1560.1 898.1 C1562.9 898.2 1569.7 899.3 1571.5 897.6 C1574.8 894.3 1577.6 878.9 1580.4 878.1 C1582.8 877.4 1589.2 888.5 1592.4 891.6 C1594.0 893.2 1598.0 895.5 1599.9 896.9 C1601.8 898.2 1606.2 903.3 1607.4 902.1 C1610.7 898.6 1614.3 882.4 1617.9 878.1 C1619.2 876.6 1625.4 877.5 1626.9 878.9 C1630.2 882.0 1634.1 893.4 1637.3 896.1 C1638.6 897.1 1642.9 894.0 1644.8 893.9 C1646.6 893.8 1650.4 894.7 1652.3 895.0 C1654.2 895.3 1657.9 896.1 1659.8 896.1 C1662.6 896.2 1668.2 895.5 1671.0 895.4 C1673.8 895.2 1679.4 894.8 1682.2 894.6 C1685.4 894.4 1691.8 894.2 1695.0 893.9 C1698.4 893.6 1705.2 892.0 1708.5 892.4 C1711.2 892.7 1716.3 896.3 1719.0 896.9 C1721.0 897.4 1725.3 896.7 1727.5 896.6 C1729.6 896.6 1733.8 896.4 1735.9 896.4 C1738.1 896.3 1742.3 896.5 1744.4 896.1 C1747.1 895.6 1752.3 893.2 1754.9 893.1 C1757.1 893.0 1761.6 894.8 1763.8 895.4 C1766.1 895.9 1770.6 897.7 1772.8 897.6 C1775.8 897.5 1781.8 895.0 1784.8 894.6 C1787.3 894.3 1792.3 894.6 1794.8 894.6 C1797.3 894.6 1802.3 894.6 1804.8 894.6 C1807.3 894.6 1812.3 894.7 1814.8 894.6 C1818.2 894.5 1824.9 893.6 1828.2 893.9 C1830.5 894.1 1834.8 896.1 1837.0 896.9 L1837.0 893.5 L190.2 893.5 Z" fill="rgba(255,0,0,0.30)"/>
<g fill="none" stroke-linejoin="round" stroke-linecap="butt">
<path d="M190.2 882.3 C192.8 881.7 198.0 880.4 200.6 880.0 C202.5 879.7 206.5 879.4 208.4 879.2 C210.4 879.0 214.4 878.1 216.2 878.4 C219.0 878.9 224.5 882.3 227.2 882.3 C229.6 882.3 234.2 878.9 236.6 878.4 C238.5 878.0 242.5 878.8 244.4 878.9 C246.3 879.1 250.2 879.3 252.2 879.5 C254.1 879.6 258.1 879.7 260.0 880.0 C263.1 880.4 269.7 883.0 272.5 882.3 C275.1 881.7 279.5 876.8 281.9 874.9 C284.2 873.0 288.8 867.9 291.2 867.5 C293.4 867.2 298.2 872.1 300.6 872.2 C303.3 872.3 308.8 868.9 311.6 868.3 C313.1 868.0 316.4 867.7 317.8 868.3 C320.3 869.3 324.8 874.6 327.2 874.5 C329.9 874.4 335.2 868.8 338.1 867.5 C339.9 866.7 343.9 865.9 345.9 865.9 C348.2 865.9 355.0 869.7 355.3 867.5 C359.5 833.6 359.5 755.3 363.8 721.4 C364.1 719.1 371.2 722.8 373.6 722.7 C375.9 722.6 380.3 720.5 382.6 720.5 C385.2 720.6 390.5 722.2 393.1 722.8 C395.8 723.3 401.0 724.8 403.7 725.0 C405.5 725.1 409.2 724.2 411.0 724.0 C412.9 723.8 418.0 724.7 418.4 723.0 C422.3 704.1 423.9 659.8 428.1 641.6 C428.5 639.7 434.6 642.1 436.8 642.3 C439.0 642.4 443.3 642.8 445.5 642.9 C447.7 643.1 452.1 643.8 454.2 643.6 C457.1 643.3 462.8 640.9 465.6 640.8 C467.6 640.8 471.7 643.4 473.7 643.2 C476.2 643.0 481.0 639.3 483.5 639.2 C486.7 639.1 493.2 642.1 496.5 642.4 C498.3 642.6 502.0 641.6 503.8 641.3 C505.6 641.1 509.3 640.4 511.1 640.3 C513.3 640.2 517.8 640.7 520.0 640.8 C522.3 640.9 527.0 642.0 529.0 641.3 C531.3 640.5 535.0 636.4 537.2 635.1 C539.5 633.8 546.0 633.3 546.9 631.0 C550.6 622.1 552.1 597.8 555.9 590.3 C556.8 588.4 565.4 591.1 565.6 593.6 C570.1 637.5 570.3 733.4 574.6 775.9 C574.8 778.1 581.4 772.5 583.6 772.6 C586.2 772.7 591.4 776.1 594.1 776.7 C596.1 777.1 600.2 776.6 602.2 776.6 C604.3 776.6 608.3 776.6 610.4 776.6 C612.4 776.6 616.5 776.8 618.5 776.5 C621.3 776.0 626.8 773.3 629.6 773.2 C631.5 773.1 635.2 775.7 637.1 775.9 C639.5 776.2 645.4 773.8 647.0 775.3 C650.4 778.5 654.8 795.1 656.9 794.4 C659.4 793.4 662.3 773.4 665.5 768.5 C666.5 767.0 671.5 768.7 673.5 768.8 C675.6 768.9 679.6 769.2 681.6 769.1 C683.9 769.0 688.5 768.2 690.9 767.9 C693.2 767.5 697.8 766.4 700.1 766.6 C703.2 766.9 709.4 769.5 712.5 769.7 C715.0 769.8 719.9 768.0 722.4 767.8 C724.4 767.7 728.4 768.4 730.5 768.6 C732.5 768.8 736.5 769.5 738.5 769.4 C741.0 769.2 746.0 767.2 748.4 767.5 C750.8 767.8 755.3 770.7 757.6 771.7 C760.0 772.8 764.5 775.4 766.9 775.9 C769.0 776.3 773.4 775.4 775.6 775.2 C777.8 775.1 783.9 772.6 784.3 774.6 C788.5 794.9 789.1 844.7 794.2 864.3 C795.0 867.3 804.4 865.0 807.8 864.9 C810.0 864.8 814.3 863.8 816.5 863.4 C818.6 863.0 822.9 861.8 825.1 861.9 C827.9 861.9 833.4 863.5 836.2 863.7 C838.2 863.9 842.3 863.5 844.3 863.4 C846.3 863.3 850.4 863.0 852.4 863.1 C854.3 863.2 858.0 863.8 859.8 864.3 C861.7 864.9 865.6 866.3 867.2 867.4 C869.9 869.2 874.3 874.9 877.1 876.1 C879.1 876.9 884.1 875.6 886.4 875.5 C888.7 875.3 893.4 874.8 895.7 874.8 C898.0 874.8 902.6 875.5 905.0 875.8 C907.3 876.0 911.9 876.4 914.2 876.7 C916.4 877.0 920.7 877.8 922.9 877.9 C924.9 878.0 928.9 877.4 931.0 877.3 C933.0 877.1 937.0 877.0 939.0 876.7 C941.5 876.3 946.5 874.1 948.9 874.2 C951.4 874.4 956.3 877.4 958.8 877.9 C960.9 878.4 965.3 878.1 967.5 878.2 C969.6 878.3 974.0 878.8 976.1 878.5 C978.6 878.1 983.6 875.3 986.0 875.4 C988.5 875.5 993.4 878.9 995.9 879.2 C998.0 879.5 1002.4 878.0 1004.5 877.7 C1006.7 877.3 1011.0 876.1 1013.2 876.1 C1015.7 876.1 1020.6 877.4 1023.1 877.3 C1025.6 877.2 1030.5 875.5 1033.0 875.4 C1034.8 875.3 1038.6 876.8 1040.4 876.7 C1042.9 876.6 1047.8 874.8 1050.3 874.6 C1052.6 874.4 1057.2 874.9 1059.5 875.0 C1061.9 875.1 1066.5 875.3 1068.8 875.4 C1070.8 875.5 1074.9 875.9 1076.9 876.0 C1078.9 876.1 1083.0 876.7 1085.0 876.6 C1087.8 876.5 1093.3 875.4 1096.1 875.4 C1098.4 875.4 1103.1 876.3 1105.4 876.6 C1107.7 876.9 1112.4 877.9 1114.7 877.8 C1117.2 877.7 1122.1 876.3 1124.6 876.0 C1126.7 875.8 1131.1 875.9 1133.2 875.9 C1135.4 875.8 1139.7 875.6 1141.9 875.7 C1144.1 875.8 1148.4 876.5 1150.6 876.8 C1152.7 877.0 1157.0 877.7 1159.2 877.8 C1162.0 878.0 1167.6 878.0 1170.3 878.1 C1173.1 878.2 1178.7 878.4 1181.5 878.4 C1183.3 878.4 1187.1 878.3 1188.9 878.3 C1190.8 878.3 1194.5 878.0 1196.3 878.2 C1199.4 878.6 1205.6 880.7 1208.7 880.9 C1210.5 881.0 1214.3 880.1 1216.1 879.7 C1218.0 879.3 1221.7 878.3 1223.5 877.9 C1225.4 877.4 1229.1 875.9 1231.0 876.0 C1234.1 876.1 1240.2 878.0 1243.3 878.4 C1245.2 878.6 1248.9 878.2 1250.8 878.4 C1252.7 878.6 1256.3 879.6 1258.2 880.0 C1260.0 880.3 1263.7 881.4 1265.6 881.5 C1268.7 881.7 1274.9 881.2 1278.0 881.5 C1280.5 881.7 1285.5 883.7 1287.9 883.4 C1291.1 883.0 1297.0 879.1 1300.2 878.4 C1302.0 878.0 1305.8 878.9 1307.7 879.0 C1309.5 879.2 1313.3 879.9 1315.1 879.7 C1317.6 879.4 1322.5 877.4 1325.0 877.2 C1327.2 877.0 1331.5 878.1 1333.7 878.4 C1335.9 878.7 1340.2 879.2 1342.4 879.6 C1344.7 880.0 1349.3 881.0 1351.7 881.5 C1354.0 881.9 1358.6 883.1 1360.9 883.3 C1363.2 883.5 1367.9 883.1 1370.2 883.0 C1372.5 882.9 1377.2 883.0 1379.5 882.7 C1381.7 882.4 1386.0 881.1 1388.2 880.5 C1390.3 880.0 1394.7 878.2 1396.8 878.3 C1399.3 878.4 1404.2 881.3 1406.7 881.4 C1409.7 881.6 1416.0 879.7 1419.1 879.6 C1421.0 879.5 1424.7 880.5 1426.5 880.9 C1428.3 881.2 1432.1 882.2 1433.9 882.1 C1436.4 881.9 1441.3 879.7 1443.8 879.6 C1446.3 879.5 1451.3 881.7 1453.7 881.4 C1455.7 881.2 1459.1 878.2 1461.1 877.7 C1463.5 877.1 1468.5 877.4 1471.0 877.3 C1473.5 877.2 1478.4 877.0 1480.9 876.9 C1483.0 876.8 1487.1 876.7 1489.2 876.6 C1491.2 876.6 1495.4 876.4 1497.4 876.4 C1499.5 876.3 1503.6 876.0 1505.7 876.1 C1508.8 876.3 1514.9 877.4 1518.0 877.7 C1519.9 877.9 1523.6 877.9 1525.5 877.9 C1527.3 878.0 1531.0 878.1 1532.9 878.1 C1534.7 878.1 1538.5 878.2 1540.3 878.2 C1542.2 878.2 1545.9 878.2 1547.7 878.3 C1549.5 878.4 1553.2 878.9 1555.0 878.9 C1556.9 878.9 1560.6 878.3 1562.5 878.1 C1564.4 878.0 1568.2 877.1 1570.0 877.4 C1572.7 877.8 1577.7 880.5 1580.4 881.1 C1583.0 881.6 1588.4 882.3 1590.9 881.9 C1592.9 881.6 1597.3 879.8 1598.4 878.1 C1601.4 873.8 1605.0 858.8 1607.4 857.9 C1609.1 857.3 1613.2 868.5 1614.9 872.2 C1615.9 874.3 1616.4 879.6 1617.9 881.1 C1620.1 883.3 1626.8 886.3 1629.9 887.1 C1631.3 887.5 1634.6 886.5 1635.8 885.6 C1638.7 883.5 1643.2 876.2 1646.3 875.1 C1649.2 874.1 1656.4 877.1 1659.8 877.4 C1662.2 877.6 1667.1 877.4 1669.5 877.4 C1672.0 877.4 1676.9 877.8 1679.3 877.4 C1682.0 876.9 1687.1 874.2 1689.7 873.7 C1691.0 873.5 1693.7 874.2 1695.0 874.4 C1698.4 874.9 1705.3 875.6 1708.5 876.6 C1711.3 877.5 1716.3 881.6 1719.0 881.9 C1721.2 882.2 1725.7 879.6 1728.0 878.9 C1730.2 878.1 1734.6 876.1 1736.9 875.9 C1739.5 875.7 1744.8 877.6 1747.4 877.4 C1749.5 877.3 1753.6 875.4 1755.7 874.8 C1757.7 874.1 1761.9 872.0 1763.9 872.2 C1766.2 872.4 1770.6 876.6 1772.8 876.6 C1775.1 876.6 1779.6 871.8 1781.8 871.9 C1784.4 872.0 1789.5 876.7 1792.3 877.4 C1794.9 878.1 1800.7 877.4 1803.5 877.4 C1806.4 877.4 1812.0 877.5 1814.8 877.4 C1817.6 877.3 1823.1 876.5 1825.9 876.2 C1828.7 876.0 1834.2 875.4 1837.0 875.1" stroke="rgba(0,0,0,0.7)" stroke-width="4.5"/>
<path d="M190.0 901.9 C192.3 901.9 196.8 901.9 199.1 901.9 C201.4 901.9 205.9 901.9 208.2 901.9 C210.5 901.9 215.0 901.9 217.3 901.9 C219.6 901.9 224.1 901.9 226.4 901.9 C228.7 901.9 233.2 901.9 235.5 901.9 C237.8 901.9 242.3 901.9 244.6 901.9 C246.8 901.9 251.4 901.9 253.7 901.9 C255.9 901.9 260.5 901.9 262.8 901.9 C265.0 901.9 269.6 901.9 271.9 901.9 C274.1 901.9 278.7 901.9 281.0 901.9 C283.2 901.9 287.8 901.9 290.0 901.9 C292.3 901.9 296.9 901.9 299.1 901.9 C301.4 901.9 306.0 901.9 308.2 901.9 C310.5 901.9 315.1 901.9 317.3 901.9 C319.6 901.9 324.2 901.9 326.4 901.9 C328.7 901.9 333.2 901.9 335.5 901.9 C337.8 901.9 342.3 901.9 344.6 901.9 C346.9 901.9 351.4 901.9 353.7 901.9 C356.0 901.9 360.5 901.9 362.8 901.9 C365.1 901.9 369.6 901.9 371.9 901.9 C374.2 901.9 378.9 901.3 381.0 901.9 C383.1 902.5 386.6 906.3 388.7 907.0 C390.7 907.6 395.4 907.0 397.6 907.0 C399.8 907.0 404.2 907.1 406.5 907.1 C408.7 907.1 413.1 907.1 415.3 907.1 C417.6 907.1 422.0 907.1 424.2 907.1 C426.4 907.1 430.9 907.1 433.1 907.1 C435.3 907.2 439.8 907.2 442.0 907.2 C444.2 907.2 448.6 907.2 450.9 907.2 C453.1 907.2 457.5 907.2 459.7 907.2 C462.0 907.2 466.4 907.3 468.6 907.3 C470.8 907.3 475.4 906.9 477.5 907.3 C480.1 907.8 485.0 910.1 487.5 910.9 C489.3 911.5 492.9 912.8 494.7 913.0 C496.9 913.3 501.5 913.0 503.8 913.0 C506.1 913.0 510.6 913.0 512.9 913.0 C515.2 913.0 519.7 913.0 522.0 913.0 C524.3 913.0 528.8 913.0 531.1 913.0 C533.3 913.0 537.9 913.0 540.2 913.0 C542.4 913.0 547.0 913.0 549.3 913.0 C551.5 913.0 556.1 913.0 558.4 913.0 C560.6 913.0 565.2 913.0 567.4 913.0 C569.7 913.0 574.3 913.0 576.5 913.0 C578.8 913.0 583.4 913.0 585.6 913.0 C587.9 913.0 592.5 913.0 594.7 913.0 C597.0 913.0 601.5 913.1 603.8 913.1 C606.1 913.1 610.6 913.1 612.9 913.1 C615.2 913.1 619.7 913.1 622.0 913.1 C624.3 913.1 628.8 913.1 631.1 913.1 C633.4 913.1 637.9 913.1 640.2 913.1 C642.5 913.1 647.0 913.1 649.3 913.1 C651.6 913.1 656.1 913.1 658.4 913.1 C660.7 913.1 665.2 913.1 667.5 913.1 C669.7 913.1 674.3 913.1 676.6 913.1 C678.8 913.1 683.4 913.1 685.7 913.1 C687.9 913.1 692.5 913.1 694.8 913.1 C697.0 913.1 701.6 913.1 703.9 913.1 C706.1 913.1 710.7 913.1 712.9 913.1 C715.2 913.1 719.8 913.1 722.0 913.1 C724.3 913.1 728.9 913.1 731.1 913.1 C733.4 913.1 738.0 913.1 740.2 913.1 C742.5 913.1 747.0 913.1 749.3 913.1 C751.6 913.1 756.1 913.1 758.4 913.1 C760.7 913.1 765.2 913.1 767.5 913.1 C769.8 913.1 774.3 913.1 776.6 913.1 C778.9 913.1 783.4 913.1 785.7 913.1 C788.0 913.1 792.5 913.1 794.8 913.1 C797.1 913.1 801.6 913.1 803.9 913.1 C806.2 913.1 810.7 913.2 813.0 913.2 C815.2 913.2 819.8 913.2 822.1 913.2 C824.3 913.2 828.9 913.2 831.2 913.2 C833.4 913.2 838.0 913.2 840.3 913.2 C842.5 913.2 847.1 913.2 849.3 913.2 C851.6 913.2 856.2 913.2 858.4 913.2 C860.7 913.2 865.3 913.2 867.5 913.2 C869.8 913.2 874.4 913.2 876.6 913.2 C878.9 913.2 883.4 913.2 885.7 913.2 C888.0 913.2 892.5 913.2 894.8 913.2 C897.1 913.2 901.6 913.2 903.9 913.2 C906.2 913.2 910.9 913.9 913.0 913.2 C915.7 912.3 920.2 907.9 922.9 907.0 C924.9 906.3 929.6 907.0 931.9 907.0 C934.1 907.1 938.6 907.1 940.8 907.1 C943.1 907.1 947.6 907.1 949.8 907.1 C952.0 907.2 956.5 907.2 958.8 907.2 C961.0 907.2 965.5 907.2 967.7 907.2 C970.0 907.3 974.5 907.3 976.7 907.3 C978.9 907.3 983.4 907.3 985.7 907.4 C987.9 907.4 992.4 907.4 994.6 907.4 C996.9 907.4 1001.4 907.4 1003.6 907.5 C1005.8 907.5 1010.3 907.5 1012.6 907.5 C1014.8 907.5 1019.3 907.5 1021.5 907.6 C1023.8 907.6 1028.5 908.3 1030.5 907.6 C1033.2 906.7 1037.7 902.3 1040.4 901.4 C1042.4 900.7 1047.0 901.4 1049.2 901.4 C1051.5 901.5 1055.9 901.5 1058.1 901.5 C1060.3 901.5 1064.7 901.5 1066.9 901.5 C1069.1 901.5 1073.6 901.6 1075.8 901.6 C1078.0 901.6 1082.4 901.6 1084.6 901.6 C1086.8 901.6 1091.2 901.6 1093.5 901.7 C1095.7 901.7 1100.1 901.7 1102.3 901.7 C1104.5 901.7 1108.9 901.7 1111.1 901.7 C1113.4 901.8 1117.8 901.8 1120.0 901.8 C1122.2 901.8 1126.6 901.8 1128.8 901.8 C1131.0 901.8 1135.5 901.9 1137.7 901.9 C1139.9 901.9 1144.3 901.9 1146.5 901.9 C1148.7 901.9 1153.1 901.9 1155.4 902.0 C1157.6 902.0 1162.0 902.3 1164.2 902.0 C1166.7 901.7 1171.6 900.3 1174.0 899.5 C1175.3 899.1 1177.7 897.2 1179.0 897.0 C1181.2 896.6 1186.0 897.0 1188.3 897.0 C1190.7 897.0 1195.3 897.0 1197.7 897.0 C1200.0 897.0 1204.7 897.0 1207.0 897.0 C1209.3 897.0 1214.0 897.0 1216.3 897.0 C1218.7 897.0 1223.3 897.0 1225.7 897.0 C1228.0 897.0 1232.7 897.0 1235.0 897.0 C1237.4 897.0 1242.0 897.0 1244.4 897.0 C1246.7 897.0 1251.4 897.0 1253.7 897.0 C1256.0 897.0 1260.7 897.0 1263.0 897.0 C1265.4 897.0 1270.0 897.0 1272.4 897.0 C1274.7 897.0 1279.5 897.5 1281.7 897.0 C1284.6 896.3 1290.0 893.2 1292.8 892.0 C1294.0 891.5 1296.5 890.4 1297.8 890.2 C1300.1 889.9 1304.8 890.2 1307.1 890.2 C1309.5 890.2 1314.1 890.2 1316.5 890.3 C1318.8 890.3 1323.5 890.3 1325.8 890.3 C1328.1 890.3 1332.8 890.3 1335.1 890.3 C1337.5 890.3 1342.1 890.3 1344.5 890.3 C1346.8 890.3 1351.5 890.4 1353.8 890.4 C1356.2 890.4 1360.8 890.4 1363.2 890.4 C1365.5 890.4 1370.2 890.4 1372.5 890.4 C1374.8 890.4 1379.5 890.4 1381.8 890.4 C1384.2 890.5 1388.8 890.5 1391.2 890.5 C1393.5 890.5 1398.2 890.8 1400.5 890.5 C1403.0 890.2 1408.0 889.0 1410.4 888.2 C1412.3 887.6 1415.9 885.5 1417.8 885.1 C1420.0 884.7 1424.7 885.1 1427.0 885.1 C1429.3 885.1 1433.9 885.1 1436.3 885.1 C1438.6 885.1 1443.2 885.1 1445.5 885.1 C1447.8 885.1 1452.4 885.1 1454.7 885.1 C1457.0 885.1 1461.6 885.1 1463.9 885.1 C1466.2 885.1 1470.9 885.1 1473.2 885.1 C1475.5 885.1 1480.1 885.1 1482.4 885.1 C1484.7 885.1 1489.3 885.1 1491.6 885.1 C1493.9 885.1 1498.5 885.1 1500.8 885.1 C1503.2 885.1 1507.8 885.1 1510.1 885.1 C1512.4 885.1 1517.1 885.5 1519.3 885.1 C1521.9 884.6 1526.7 882.3 1529.2 881.4 C1530.7 880.8 1533.7 879.3 1535.3 879.0 C1537.5 878.7 1542.2 879.0 1544.4 879.0 C1546.7 879.0 1551.3 879.0 1553.6 879.0 C1555.9 879.0 1560.4 879.0 1562.7 879.0 C1565.0 879.0 1569.6 879.0 1571.9 879.0 C1574.2 879.0 1578.7 879.0 1581.0 879.0 C1583.3 879.0 1587.9 879.0 1590.2 879.0 C1592.4 879.0 1597.0 879.0 1599.3 879.0 C1601.6 879.0 1606.2 879.0 1608.4 879.0 C1610.7 879.0 1615.3 879.0 1617.6 879.0 C1619.9 879.0 1624.4 879.0 1626.7 879.0 C1629.0 879.0 1633.6 879.0 1635.9 879.0 C1638.2 879.0 1642.7 879.0 1645.0 879.0 C1647.3 879.0 1651.9 879.0 1654.2 879.0 C1656.4 879.0 1661.0 879.0 1663.3 879.0 C1665.6 879.0 1670.2 879.0 1672.4 879.0 C1674.7 879.0 1679.3 879.0 1681.6 879.0 C1683.9 879.0 1688.4 879.0 1690.7 879.0 C1693.0 879.0 1697.6 879.0 1699.9 879.0 C1702.1 879.0 1706.7 879.0 1709.0 879.0 C1711.3 879.0 1715.9 879.0 1718.1 879.0 C1720.4 879.0 1725.0 879.0 1727.3 879.0 C1729.6 879.0 1734.1 879.0 1736.4 879.0 C1738.7 879.0 1743.3 879.0 1745.6 879.0 C1747.9 879.0 1752.4 879.0 1754.7 879.0 C1757.0 879.0 1761.6 879.0 1763.9 879.0 C1766.1 879.0 1770.7 879.0 1773.0 879.0 C1775.3 879.0 1779.9 879.0 1782.1 879.0 C1784.4 879.0 1789.0 879.0 1791.3 879.0 C1793.6 879.0 1798.1 879.0 1800.4 879.0 C1802.7 879.0 1807.3 879.0 1809.6 879.0 C1811.9 879.0 1816.4 879.0 1818.7 879.0 C1821.0 879.0 1825.6 879.0 1827.9 879.0 C1830.1 879.0 1834.7 879.0 1837.0 879.0" stroke="rgba(255,150,0,0.7)" stroke-width="4.5" stroke-dasharray="20 10"/>
<path d="M190.2 887.0 C192.4 887.0 196.8 887.2 199.0 887.2 C201.3 887.2 205.7 887.4 207.9 887.4 C210.1 887.4 214.5 887.5 216.8 887.6 C219.0 887.6 223.4 887.9 225.6 887.8 C228.4 887.6 233.8 886.5 236.6 886.2 C238.7 886.0 242.9 885.9 245.0 885.8 C247.1 885.7 251.4 885.4 253.5 885.3 C255.6 885.2 259.8 885.0 261.9 884.8 C264.0 884.7 268.2 884.5 270.3 884.4 C272.4 884.3 276.6 884.0 278.8 883.9 C279.5 883.9 281.3 883.5 281.9 883.9 C283.6 885.1 286.4 888.9 288.1 890.2 C289.5 891.2 292.7 893.0 294.4 893.3 C296.7 893.7 301.7 893.1 304.1 893.1 C306.6 893.0 311.5 892.9 313.9 892.9 C316.3 892.9 321.2 892.8 323.6 892.7 C326.1 892.7 331.1 893.0 333.4 892.5 C336.6 891.8 342.7 888.1 345.9 887.8 C348.0 887.6 352.9 889.0 354.5 890.2 C355.5 891.0 356.0 894.2 356.1 895.6 C358.5 930.7 360.6 1003.1 364.3 1036.2 C364.5 1037.9 369.7 1034.9 371.5 1034.8 C374.4 1034.6 382.5 1037.4 383.0 1034.8 C387.5 1013.9 387.6 962.7 391.5 941.0 C391.9 939.0 397.9 940.2 400.1 939.9 C402.2 939.6 406.6 939.1 408.7 938.8 C410.9 938.5 415.2 937.7 417.3 937.7 C417.9 937.7 419.4 938.2 419.5 938.8 C422.1 958.3 424.4 999.8 428.1 1018.3 C428.5 1020.2 434.0 1020.2 436.0 1020.5 C438.3 1020.8 443.2 1020.6 445.5 1020.6 C447.9 1020.6 452.7 1020.7 455.1 1020.7 C457.4 1020.7 462.2 1020.8 464.6 1020.8 C467.0 1020.8 471.8 1020.6 474.2 1020.6 C476.6 1020.6 481.3 1020.4 483.7 1020.4 C486.1 1020.4 490.9 1020.3 493.3 1020.2 C495.5 1020.1 499.8 1019.8 501.9 1019.7 C504.1 1019.6 508.4 1019.4 510.5 1019.2 C512.6 1019.1 517.0 1018.9 519.1 1018.8 C521.2 1018.7 525.7 1018.9 527.7 1018.3 C530.3 1017.5 535.1 1014.0 537.7 1013.3 C539.9 1012.7 546.2 1011.1 547.0 1013.0 C550.8 1021.5 552.6 1046.0 556.3 1054.9 C557.0 1056.7 564.7 1057.6 564.9 1055.6 C569.1 1017.9 571.8 935.7 574.2 895.8 C574.3 893.3 573.6 887.1 574.9 885.8 C576.3 884.5 582.5 885.4 585.0 885.1 C587.2 884.9 591.4 883.9 593.6 883.7 C595.8 883.5 600.1 883.8 602.3 883.8 C604.5 883.9 608.8 883.9 611.0 884.0 C613.2 884.0 617.5 883.9 619.7 884.1 C622.2 884.4 627.1 885.7 629.6 886.0 C631.6 886.2 635.8 886.2 637.9 886.2 C639.9 886.2 644.1 886.4 646.1 886.4 C648.2 886.4 652.5 886.1 654.4 886.6 C657.0 887.3 661.7 890.8 664.3 891.5 C666.5 892.1 671.4 891.5 673.7 891.5 C676.1 891.5 680.8 891.6 683.2 891.6 C685.6 891.6 690.3 891.6 692.6 891.6 C695.0 891.6 699.7 891.6 702.1 891.6 C704.4 891.7 709.2 891.7 711.5 891.7 C713.9 891.7 718.6 891.7 721.0 891.7 C723.3 891.7 728.1 891.7 730.4 891.8 C732.8 891.8 737.5 891.8 739.9 891.8 C742.2 891.8 746.9 891.8 749.3 891.8 C751.7 891.8 756.4 891.9 758.8 891.9 C761.1 891.9 766.1 892.6 768.2 891.9 C770.3 891.3 773.5 887.3 775.6 886.6 C777.9 885.8 785.0 888.2 785.5 886.0 C789.7 865.8 789.8 817.0 794.2 796.9 C794.7 794.4 802.5 795.8 805.3 795.7 C807.5 795.6 811.8 796.0 814.0 796.2 C816.1 796.3 820.5 796.5 822.6 796.6 C824.8 796.7 829.2 796.9 831.3 797.0 C833.5 797.2 837.8 797.3 840.0 797.5 C842.5 797.7 847.4 798.7 849.9 798.8 C852.1 798.8 856.4 797.9 858.6 797.9 C860.6 797.9 865.1 799.8 866.6 798.8 C869.7 796.8 873.9 787.9 877.1 785.8 C878.7 784.7 883.6 786.0 885.8 786.1 C887.9 786.2 892.2 786.5 894.4 786.4 C896.9 786.3 901.8 785.3 904.3 785.2 C906.5 785.1 910.9 786.2 913.0 785.8 C915.9 785.3 921.2 782.1 924.1 781.4 C925.9 781.0 929.7 781.0 931.5 781.1 C933.6 781.2 937.7 781.8 939.8 782.0 C941.8 782.3 946.0 782.7 948.0 783.0 C950.1 783.2 954.2 784.0 956.3 783.9 C958.3 783.8 962.3 782.7 964.3 782.3 C966.4 782.0 970.4 781.0 972.4 780.8 C975.8 780.5 982.6 780.4 986.0 780.2 C989.1 780.0 995.2 779.1 998.3 779.0 C1000.2 778.9 1003.9 779.2 1005.8 779.3 C1007.6 779.4 1011.3 779.6 1013.2 779.6 C1015.7 779.6 1020.7 778.7 1023.1 779.0 C1025.3 779.3 1029.5 781.6 1031.7 782.1 C1034.0 782.6 1038.7 782.8 1041.0 783.0 C1043.3 783.2 1048.0 783.7 1050.3 783.9 C1052.6 784.1 1057.2 784.2 1059.5 784.3 C1061.9 784.5 1066.5 784.8 1068.8 784.8 C1070.8 784.8 1074.9 784.6 1076.9 784.6 C1078.9 784.5 1083.0 784.4 1085.0 784.4 C1087.1 784.4 1091.2 784.4 1093.2 784.4 C1095.3 784.4 1099.4 784.4 1101.5 784.4 C1103.5 784.4 1107.6 784.4 1109.7 784.4 C1112.0 784.4 1116.7 784.6 1119.0 784.7 C1121.3 784.8 1126.0 785.0 1128.3 785.0 C1130.6 785.1 1135.3 785.3 1137.6 785.4 C1139.9 785.5 1144.6 785.7 1146.9 785.7 C1148.7 785.7 1152.5 785.7 1154.3 785.7 C1156.2 785.7 1159.9 785.6 1161.7 785.7 C1164.2 785.8 1169.1 786.2 1171.6 786.4 C1174.1 786.6 1179.0 787.2 1181.5 787.1 C1184.6 787.0 1190.9 786.3 1193.9 785.7 C1197.0 785.1 1203.1 782.6 1206.2 782.0 C1208.0 781.7 1211.8 782.1 1213.7 782.1 C1215.5 782.1 1219.3 782.6 1221.1 782.2 C1224.3 781.5 1230.3 778.5 1233.4 777.6 C1235.8 776.9 1240.8 776.2 1243.3 776.0 C1245.1 775.9 1248.9 776.2 1250.8 776.2 C1252.6 776.2 1256.4 776.1 1258.2 776.4 C1261.3 776.8 1267.4 778.5 1270.5 778.9 C1272.6 779.2 1277.0 778.9 1279.2 778.9 C1281.4 778.9 1285.7 778.7 1287.9 778.9 C1290.1 779.0 1294.5 780.5 1296.5 780.1 C1299.1 779.6 1303.8 776.0 1306.4 775.2 C1309.7 774.2 1316.6 773.2 1320.0 772.7 C1322.5 772.4 1327.5 771.9 1330.0 772.0 C1333.4 772.2 1340.2 774.0 1343.6 773.8 C1347.0 773.6 1353.8 771.1 1357.2 770.7 C1360.3 770.3 1366.6 770.3 1369.6 770.7 C1372.4 771.1 1377.9 773.5 1380.7 773.8 C1382.6 774.0 1386.6 773.0 1388.5 772.8 C1390.5 772.5 1394.4 772.0 1396.4 771.7 C1398.3 771.5 1402.3 771.1 1404.2 770.7 C1407.3 770.1 1413.5 768.4 1416.6 768.0 C1418.6 767.7 1422.6 767.8 1424.7 767.8 C1426.7 767.8 1430.7 767.7 1432.7 767.6 C1434.6 767.5 1438.2 767.1 1440.1 767.0 C1441.9 766.9 1445.6 766.5 1447.5 766.4 C1450.3 766.3 1455.9 766.4 1458.7 766.4 C1461.4 766.4 1467.0 766.6 1469.8 766.4 C1472.6 766.2 1478.1 764.7 1480.9 764.5 C1483.0 764.3 1487.1 764.8 1489.2 764.9 C1491.2 765.0 1495.4 765.3 1497.4 765.4 C1499.5 765.5 1503.7 766.0 1505.7 765.8 C1508.8 765.5 1514.9 763.8 1518.0 763.3 C1520.0 763.0 1524.0 762.6 1526.0 762.3 C1528.1 762.1 1532.1 761.5 1534.1 761.4 C1537.5 761.2 1544.3 760.9 1547.7 760.8 C1549.5 760.7 1553.2 760.7 1555.0 760.6 C1557.1 760.5 1561.3 760.5 1563.2 759.9 C1565.4 759.2 1569.4 755.3 1571.5 755.4 C1573.7 755.5 1579.2 758.6 1580.4 760.6 C1582.0 763.4 1582.5 771.3 1582.7 774.9 C1584.0 793.6 1584.2 831.2 1586.4 849.7 C1588.3 866.1 1597.1 914.8 1599.2 914.8 C1601.2 914.8 1601.9 866.0 1602.9 849.7 C1604.1 831.0 1605.1 792.9 1608.1 774.9 C1608.6 771.7 1616.1 763.8 1617.1 765.1 C1618.9 767.5 1618.9 783.6 1619.4 789.8 C1621.4 815.6 1623.1 869.3 1626.9 893.1 C1627.2 895.1 1634.5 891.6 1635.8 893.1 C1639.0 896.9 1642.8 914.8 1644.8 914.1 C1647.3 913.3 1650.4 892.2 1653.8 887.1 C1654.9 885.5 1660.5 887.1 1662.8 887.1 C1665.0 887.1 1669.5 887.1 1671.8 887.1 C1674.0 887.1 1678.5 887.1 1680.7 887.1 C1683.0 887.1 1687.5 887.2 1689.7 887.1 C1692.2 887.0 1697.3 886.5 1699.8 886.4 C1702.4 886.2 1707.5 885.6 1710.0 885.6 C1712.2 885.6 1716.7 886.2 1719.0 886.4 C1721.2 886.5 1725.7 887.3 1727.9 887.1 C1730.2 886.9 1734.7 885.4 1736.9 884.9 C1739.2 884.3 1743.6 883.1 1745.9 882.6 C1748.1 882.1 1752.7 880.9 1754.9 881.1 C1757.9 881.4 1763.8 884.4 1766.9 884.9 C1770.2 885.4 1777.0 885.4 1780.3 884.9 C1783.7 884.4 1790.4 881.8 1793.8 881.1 C1795.8 880.7 1799.8 880.7 1801.8 880.6 C1803.8 880.5 1807.8 880.2 1809.8 880.1 C1811.8 880.0 1816.7 878.2 1817.8 879.6 C1821.3 884.3 1825.7 904.0 1828.2 904.3 C1830.5 904.6 1834.8 887.5 1837.0 881.9" stroke="rgba(245,155,30,0.85)" stroke-width="2"/>
<path d="M190.2 785.0 C192.5 784.9 197.0 784.8 199.3 784.7 C201.6 784.6 206.2 784.2 208.4 784.4 C210.8 784.6 215.4 786.5 217.8 786.6 C219.9 786.7 224.2 785.4 226.4 785.0 C228.6 784.6 232.8 783.5 235.0 783.4 C237.3 783.3 242.0 784.3 244.4 784.4 C246.5 784.5 250.8 784.1 253.0 784.0 C255.1 783.9 259.4 783.7 261.6 783.6 C263.7 783.5 268.0 783.3 270.2 783.2 C272.3 783.1 276.6 782.8 278.8 782.8 C281.3 782.8 286.4 783.2 288.9 783.3 C291.5 783.5 296.6 784.0 299.1 783.9 C301.4 783.8 306.1 783.1 308.4 782.7 C310.2 782.4 313.7 781.6 315.4 781.2 C317.2 780.8 320.7 780.0 322.5 779.7 C325.2 779.2 330.7 778.2 333.4 777.7 C336.2 777.1 341.6 775.9 344.4 775.6 C347.1 775.3 352.6 775.6 355.3 775.3 C357.4 775.1 361.6 774.0 363.6 773.6 C365.7 773.2 369.9 772.4 372.0 772.0 C374.1 771.5 378.2 770.6 380.3 770.3 C382.2 770.0 386.2 770.0 388.1 769.8 C390.1 769.7 393.9 769.4 395.9 769.4 C398.1 769.4 402.6 769.5 404.8 769.5 C407.0 769.6 411.4 769.6 413.6 769.6 C415.9 769.7 420.3 769.7 422.5 769.8 C424.7 769.8 429.2 769.9 431.4 769.9 C433.4 769.9 437.5 770.1 439.5 770.1 C441.6 770.1 445.6 770.2 447.7 770.3 C449.7 770.3 453.8 770.6 455.8 770.5 C457.8 770.4 461.9 769.6 463.9 769.4 C466.3 769.2 471.2 769.1 473.7 769.0 C476.1 768.9 481.0 768.7 483.5 768.6 C485.9 768.5 490.8 768.3 493.2 768.2 C495.7 768.1 500.6 767.9 503.0 767.8 C505.5 767.7 510.4 767.5 512.8 767.4 C515.2 767.3 520.1 767.2 522.6 767.1 C525.0 767.1 529.9 766.9 532.3 766.9 C534.8 766.8 539.6 766.7 542.1 766.6 C544.5 766.6 549.4 766.4 551.8 766.4 C554.3 766.3 559.2 766.1 561.6 766.1 C563.7 766.1 567.9 766.1 570.0 766.1 C572.0 766.1 576.2 766.1 578.3 766.0 C580.4 766.0 584.6 766.0 586.6 766.0 C588.7 766.0 592.9 766.0 595.0 766.0 C597.1 766.0 601.2 766.1 603.2 766.1 C605.3 766.1 609.4 766.1 611.5 766.1 C613.5 766.1 617.6 766.2 619.7 766.2 C622.1 766.2 626.8 766.4 629.2 766.5 C631.6 766.5 636.3 766.7 638.7 766.7 C641.1 766.8 645.8 767.1 648.2 767.0 C650.2 767.0 654.2 766.5 656.2 766.4 C658.3 766.2 662.3 765.8 664.3 765.7 C666.5 765.6 671.0 765.5 673.2 765.5 C675.5 765.4 680.0 765.3 682.2 765.2 C684.4 765.1 688.9 765.0 691.1 765.0 C693.4 764.9 697.9 764.6 700.1 764.7 C702.4 764.8 707.1 765.4 709.4 765.7 C711.7 765.9 716.4 766.3 718.7 766.6 C721.2 766.9 726.1 767.5 728.6 767.9 C731.1 768.2 736.0 769.0 738.5 769.1 C741.3 769.2 746.8 768.5 749.6 768.5 C751.9 768.5 756.6 768.7 758.9 768.8 C761.2 768.9 765.9 769.4 768.2 769.1 C770.6 768.8 775.1 767.2 777.5 766.6 C779.8 766.0 784.4 764.5 786.7 764.1 C788.7 763.8 792.7 763.9 794.8 763.8 C796.8 763.7 800.8 763.4 802.8 763.5 C805.4 763.6 810.7 764.2 813.3 764.5 C815.9 764.7 821.2 765.2 823.8 765.4 C825.8 765.5 829.9 765.7 831.9 765.8 C833.9 765.9 838.0 766.1 840.0 766.2 C842.3 766.3 847.0 766.4 849.3 766.4 C851.6 766.5 856.3 766.6 858.6 766.6 C860.9 766.6 865.5 766.4 867.9 766.3 C870.2 766.2 874.8 766.1 877.1 766.0 C879.3 765.9 883.6 765.8 885.8 765.7 C887.9 765.6 892.2 765.4 894.4 765.4 C896.6 765.3 900.9 765.1 903.1 765.0 C905.2 764.9 909.6 765.0 911.7 764.7 C914.2 764.4 919.1 763.2 921.6 762.8 C924.1 762.3 929.0 760.8 931.5 760.8 C934.0 760.8 938.9 762.3 941.4 762.8 C943.9 763.2 948.8 764.5 951.3 764.7 C953.8 764.9 958.7 764.9 961.2 764.7 C963.5 764.5 968.0 763.6 970.3 763.3 C972.5 762.9 977.1 762.2 979.3 761.8 C981.6 761.5 986.1 760.7 988.4 760.4 C990.5 760.2 994.6 760.0 996.7 759.9 C998.7 759.7 1002.9 759.5 1004.9 759.3 C1007.0 759.2 1011.2 758.6 1013.2 758.8 C1015.5 759.0 1020.0 760.3 1022.3 760.8 C1024.5 761.3 1029.1 762.2 1031.3 762.7 C1033.6 763.2 1038.1 764.5 1040.4 764.7 C1042.8 764.9 1047.8 764.0 1050.3 764.1 C1052.8 764.2 1057.7 765.5 1060.2 765.7 C1062.3 765.9 1066.4 765.6 1068.5 765.6 C1070.5 765.5 1074.7 765.5 1076.7 765.4 C1078.8 765.4 1082.9 765.2 1085.0 765.3 C1087.5 765.4 1092.4 765.8 1094.9 765.9 C1097.4 766.0 1102.3 766.5 1104.8 766.5 C1107.3 766.5 1112.2 766.0 1114.7 765.9 C1117.2 765.8 1122.1 765.3 1124.6 765.3 C1126.8 765.3 1131.1 765.8 1133.2 766.0 C1135.4 766.2 1139.7 766.6 1141.9 766.7 C1143.7 766.8 1147.5 766.7 1149.3 766.7 C1151.2 766.7 1154.9 766.6 1156.7 766.7 C1158.6 766.8 1162.3 767.6 1164.2 767.9 C1166.0 768.1 1169.7 768.8 1171.6 769.0 C1173.4 769.2 1177.2 769.5 1179.0 769.6 C1180.8 769.8 1184.6 770.5 1186.4 770.2 C1188.9 769.8 1193.8 767.8 1196.3 767.1 C1198.7 766.5 1203.7 765.2 1206.2 765.0 C1208.4 764.8 1212.8 765.8 1214.9 765.6 C1217.1 765.4 1221.4 764.2 1223.5 763.4 C1226.1 762.4 1230.8 759.3 1233.4 758.7 C1236.4 758.0 1242.7 758.0 1245.8 758.2 C1248.9 758.4 1255.1 759.7 1258.2 760.3 C1261.3 761.0 1267.4 762.7 1270.5 763.4 C1273.6 764.1 1279.8 765.5 1282.9 765.9 C1284.1 766.1 1286.8 766.4 1287.9 765.9 C1290.5 764.8 1295.2 760.9 1297.8 759.7 C1300.1 758.6 1305.2 757.1 1307.7 756.6 C1309.8 756.2 1314.2 756.4 1316.3 756.0 C1318.5 755.6 1322.8 753.5 1325.0 753.5 C1327.3 753.5 1332.0 755.2 1334.3 755.8 C1336.6 756.4 1341.2 758.0 1343.6 758.1 C1347.0 758.3 1353.8 757.0 1357.2 756.9 C1359.7 756.9 1364.7 757.1 1367.1 757.7 C1370.4 758.4 1376.7 761.9 1379.9 762.1 C1382.2 762.2 1386.7 759.8 1389.0 759.0 C1391.2 758.2 1395.7 756.5 1398.0 755.9 C1400.3 755.3 1405.0 754.6 1407.3 754.1 C1409.6 753.7 1414.3 752.6 1416.6 752.4 C1418.4 752.2 1422.2 752.4 1424.0 752.4 C1425.8 752.4 1429.6 752.6 1431.4 752.4 C1434.5 752.0 1440.7 750.2 1443.8 750.1 C1446.0 750.0 1450.3 752.0 1452.5 751.9 C1455.0 751.8 1459.9 749.6 1462.4 749.1 C1464.2 748.7 1468.0 748.9 1469.8 748.5 C1472.6 747.9 1478.1 745.7 1480.9 745.4 C1482.9 745.2 1486.9 746.0 1489.0 746.2 C1491.0 746.4 1495.0 747.1 1497.0 747.0 C1499.8 746.9 1505.3 745.8 1508.1 745.4 C1511.2 745.0 1517.4 744.1 1520.5 743.8 C1523.9 743.5 1530.7 743.0 1534.1 742.9 C1536.4 742.8 1541.1 742.9 1543.4 742.9 C1545.7 742.9 1550.6 743.6 1552.7 742.9 C1555.5 741.9 1560.3 736.9 1563.2 735.9 C1565.7 735.0 1571.3 735.4 1574.1 735.3 C1576.8 735.1 1582.2 734.9 1584.9 734.7 C1586.8 734.5 1590.5 734.0 1592.4 733.8 C1594.3 733.6 1598.0 733.2 1599.9 732.9 C1602.5 732.4 1607.8 731.2 1610.4 730.6 C1613.0 730.1 1618.2 728.8 1620.9 728.4 C1623.1 728.1 1627.6 728.1 1629.8 728.0 C1632.1 728.0 1636.6 727.7 1638.8 727.7 C1641.4 727.7 1646.7 728.0 1649.3 728.0 C1651.9 728.1 1657.2 728.1 1659.8 728.4 C1662.8 728.8 1668.8 730.7 1671.8 730.7 C1674.4 730.7 1679.6 729.0 1682.2 728.7 C1685.4 728.4 1691.8 728.3 1695.0 728.4 C1697.6 728.5 1702.9 729.3 1705.5 729.5 C1708.1 729.8 1713.4 731.0 1716.0 730.7 C1719.0 730.3 1724.9 727.6 1727.9 726.9 C1730.1 726.4 1734.7 725.9 1736.9 725.6 C1739.2 725.3 1743.6 724.3 1745.9 724.3 C1748.1 724.3 1752.7 725.2 1754.9 725.5 C1757.2 725.7 1761.7 726.8 1763.9 726.6 C1766.2 726.4 1770.5 724.1 1772.8 723.7 C1775.0 723.4 1779.7 723.8 1782.0 723.8 C1784.3 723.8 1788.8 723.9 1791.1 723.9 C1793.4 723.9 1798.0 723.9 1800.3 724.0 C1802.6 724.0 1807.2 724.0 1809.5 724.0 C1811.8 724.1 1816.4 724.1 1818.7 724.1 C1821.0 724.1 1825.5 724.2 1827.8 724.2 C1830.1 724.2 1834.7 724.3 1837.0 724.3" stroke="rgba(0,255,0,0.8)" stroke-width="2.2"/>
<path d="M190.2 897.2 C192.4 896.8 196.7 896.0 198.9 895.6 C201.1 895.2 205.4 894.5 207.6 894.1 C209.7 893.7 214.2 892.2 216.2 892.5 C219.1 893.0 224.4 896.9 227.2 897.2 C229.5 897.5 234.2 895.1 236.6 894.8 C238.5 894.6 242.5 895.0 244.4 895.1 C246.3 895.1 250.2 895.3 252.2 895.3 C254.1 895.4 258.1 895.4 260.0 895.6 C263.1 895.9 269.6 897.9 272.5 897.2 C275.5 896.5 280.5 891.3 283.4 890.2 C285.2 889.5 289.4 889.7 291.2 890.2 C293.7 890.9 298.1 895.0 300.6 895.3 C303.6 895.6 310.0 892.8 313.1 892.5 C315.0 892.3 319.0 892.8 320.9 893.3 C323.0 893.9 326.7 896.4 328.8 896.9 C330.6 897.3 334.7 897.3 336.6 896.9 C339.0 896.4 343.6 893.1 345.9 893.0 C348.2 892.9 352.9 896.2 355.3 896.4 C357.3 896.6 361.4 895.1 363.4 894.7 C365.4 894.3 369.4 893.2 371.5 893.0 C374.3 892.7 380.1 892.6 383.0 892.7 C384.8 892.8 388.3 893.7 390.1 893.7 C392.1 893.7 396.2 893.2 398.2 893.0 C400.3 892.8 404.3 892.4 406.4 892.2 C408.4 892.0 412.5 891.7 414.5 891.5 C417.4 891.2 423.1 890.3 425.9 890.4 C429.1 890.5 435.6 892.0 438.8 892.3 C440.9 892.5 445.3 892.2 447.4 892.1 C449.6 892.1 453.9 892.0 456.0 892.0 C458.1 891.9 462.5 891.6 464.6 891.8 C466.8 892.0 471.1 893.4 473.2 893.3 C475.7 893.2 480.7 890.8 483.2 890.8 C485.4 890.8 489.6 892.7 491.8 893.0 C494.0 893.3 498.5 893.0 500.8 893.0 C503.0 893.0 507.5 893.0 509.8 893.0 C512.0 893.0 516.5 893.0 518.7 893.0 C521.0 893.0 526.0 894.1 527.7 893.0 C530.8 890.9 534.6 882.4 537.7 880.1 C539.9 878.5 546.3 877.6 549.1 877.5 C550.9 877.4 554.5 878.7 556.3 879.1 C558.1 879.6 562.0 879.9 563.5 880.8 C564.9 881.6 566.8 884.5 567.8 885.8 C569.3 887.9 571.5 893.3 573.5 894.4 C575.6 895.5 581.6 894.5 584.2 894.5 C586.9 894.5 592.3 894.6 595.0 894.6 C597.2 894.6 601.6 894.6 603.9 894.6 C606.1 894.6 610.5 894.6 612.7 894.6 C615.0 894.6 619.4 894.6 621.6 894.6 C623.8 894.6 628.2 894.6 630.5 894.6 C632.7 894.6 637.1 894.6 639.3 894.6 C641.6 894.6 646.9 893.1 648.2 894.6 C651.3 898.2 654.6 914.9 656.9 915.0 C659.1 915.1 663.0 898.8 666.1 895.2 C667.2 893.9 671.9 895.5 673.9 895.5 C675.8 895.6 679.7 895.9 681.6 895.9 C684.0 895.9 688.9 895.7 691.3 895.6 C693.7 895.6 698.6 895.4 701.0 895.4 C703.5 895.3 708.3 895.2 710.7 895.1 C713.2 895.0 718.0 894.9 720.5 894.8 C722.9 894.7 727.7 894.6 730.2 894.5 C732.6 894.5 737.5 894.3 739.9 894.3 C742.3 894.2 747.3 893.6 749.6 894.0 C751.8 894.4 756.1 896.5 758.2 897.4 C760.4 898.2 764.9 901.1 766.9 900.8 C769.2 900.4 773.2 895.1 775.6 894.6 C778.1 894.0 783.9 896.2 786.7 896.5 C788.7 896.7 792.9 896.7 795.0 896.7 C797.0 896.8 801.2 896.9 803.2 896.9 C805.3 896.9 809.5 897.3 811.5 897.1 C814.6 896.8 820.7 894.9 823.8 894.6 C825.8 894.4 829.9 895.2 831.9 895.4 C833.9 895.5 838.0 896.1 840.0 896.1 C842.3 896.1 847.0 895.8 849.3 895.7 C851.6 895.5 856.5 894.6 858.6 895.2 C860.9 895.9 865.0 900.7 867.2 900.8 C869.3 900.8 873.6 896.2 875.9 895.6 C878.1 895.0 883.1 895.9 885.5 896.0 C887.9 896.1 892.7 896.3 895.0 896.5 C897.4 896.6 902.2 896.8 904.6 896.9 C907.0 897.0 911.8 897.3 914.2 897.3 C916.5 897.3 921.2 897.2 923.5 897.2 C925.8 897.2 930.5 897.3 932.8 897.1 C934.8 896.9 938.8 895.9 940.8 895.5 C942.9 895.2 946.9 893.8 948.9 894.0 C951.4 894.2 956.3 896.8 958.8 897.3 C960.9 897.7 965.3 897.4 967.5 897.5 C969.6 897.5 974.0 897.9 976.1 897.7 C978.6 897.5 983.5 895.9 986.0 895.9 C988.5 896.0 993.4 897.9 995.9 898.1 C998.3 898.3 1003.3 897.5 1005.8 897.3 C1008.3 897.1 1013.3 896.9 1015.7 896.5 C1017.6 896.2 1021.2 894.8 1023.1 894.6 C1025.4 894.4 1030.0 894.8 1032.2 894.9 C1034.5 895.0 1039.1 895.1 1041.4 895.2 C1043.7 895.3 1048.2 895.4 1050.5 895.5 C1052.8 895.6 1057.4 895.7 1059.7 895.8 C1061.9 895.9 1066.5 896.1 1068.8 896.1 C1070.8 896.1 1074.9 896.0 1076.9 896.0 C1078.9 895.9 1083.0 895.8 1085.0 895.8 C1087.3 895.8 1092.0 895.9 1094.3 895.9 C1096.6 896.0 1101.2 896.1 1103.5 896.1 C1105.9 896.1 1110.5 896.2 1112.8 896.2 C1115.1 896.3 1119.8 896.5 1122.1 896.4 C1124.4 896.3 1129.1 895.9 1131.4 895.8 C1133.7 895.6 1138.4 895.1 1140.7 895.1 C1143.0 895.1 1147.6 895.4 1150.0 895.5 C1152.3 895.5 1156.9 895.8 1159.2 895.8 C1161.5 895.8 1166.0 895.5 1168.3 895.4 C1170.5 895.3 1175.1 895.0 1177.3 894.9 C1179.6 894.8 1184.1 894.4 1186.4 894.5 C1188.4 894.6 1192.4 895.4 1194.5 895.8 C1196.5 896.1 1200.5 896.9 1202.5 897.0 C1204.8 897.1 1209.5 896.8 1211.8 896.7 C1214.1 896.6 1218.8 896.5 1221.1 896.4 C1223.4 896.3 1228.1 896.3 1230.4 896.2 C1232.7 896.2 1237.3 896.1 1239.7 896.1 C1242.0 896.1 1246.6 896.0 1248.9 895.9 C1251.2 895.9 1255.9 895.9 1258.2 895.8 C1261.0 895.6 1266.5 895.1 1269.3 894.8 C1272.1 894.6 1277.7 893.8 1280.4 893.9 C1282.3 894.0 1286.0 895.3 1287.9 895.8 C1290.4 896.5 1295.3 898.7 1297.8 898.9 C1299.9 899.0 1304.2 897.3 1306.4 897.0 C1308.4 896.8 1312.4 896.9 1314.5 896.9 C1316.5 896.8 1320.5 896.8 1322.5 896.7 C1325.0 896.6 1330.0 896.3 1332.5 896.2 C1334.9 896.1 1339.9 895.7 1342.4 895.7 C1344.7 895.7 1349.3 895.9 1351.7 896.0 C1354.0 896.1 1358.6 896.5 1360.9 896.3 C1363.1 896.1 1367.4 894.6 1369.6 894.4 C1371.9 894.2 1376.7 894.6 1379.1 894.6 C1381.4 894.6 1386.2 894.8 1388.5 894.8 C1390.9 894.8 1395.7 894.7 1398.0 895.0 C1400.2 895.3 1404.5 896.6 1406.7 896.9 C1408.7 897.1 1412.9 897.0 1414.9 897.0 C1417.0 897.0 1421.1 897.0 1423.2 897.0 C1425.2 897.0 1429.3 897.1 1431.4 897.1 C1433.6 897.1 1437.9 896.8 1440.1 896.8 C1442.2 896.7 1446.6 896.5 1448.8 896.4 C1450.9 896.3 1455.3 896.1 1457.4 896.1 C1459.6 896.0 1463.9 895.7 1466.1 895.7 C1468.4 895.7 1473.1 895.8 1475.4 895.9 C1477.7 895.9 1482.3 896.0 1484.7 896.0 C1487.0 896.0 1491.6 896.1 1493.9 896.1 C1496.2 896.2 1500.9 896.3 1503.2 896.3 C1505.5 896.3 1510.2 896.3 1512.5 896.3 C1514.8 896.3 1519.4 896.3 1521.8 896.3 C1524.1 896.3 1528.7 896.3 1531.0 896.3 C1533.3 896.3 1538.0 896.2 1540.3 896.3 C1542.8 896.4 1547.7 897.0 1550.2 897.2 C1552.7 897.4 1557.6 898.1 1560.1 898.1 C1562.9 898.2 1569.7 899.3 1571.5 897.6 C1574.8 894.3 1577.6 878.9 1580.4 878.1 C1582.8 877.4 1589.2 888.5 1592.4 891.6 C1594.0 893.2 1598.0 895.5 1599.9 896.9 C1601.8 898.2 1606.2 903.3 1607.4 902.1 C1610.7 898.6 1614.3 882.4 1617.9 878.1 C1619.2 876.6 1625.4 877.5 1626.9 878.9 C1630.2 882.0 1634.1 893.4 1637.3 896.1 C1638.6 897.1 1642.9 894.0 1644.8 893.9 C1646.6 893.8 1650.4 894.7 1652.3 895.0 C1654.2 895.3 1657.9 896.1 1659.8 896.1 C1662.6 896.2 1668.2 895.5 1671.0 895.4 C1673.8 895.2 1679.4 894.8 1682.2 894.6 C1685.4 894.4 1691.8 894.2 1695.0 893.9 C1698.4 893.6 1705.2 892.0 1708.5 892.4 C1711.2 892.7 1716.3 896.3 1719.0 896.9 C1721.0 897.4 1725.3 896.7 1727.5 896.6 C1729.6 896.6 1733.8 896.4 1735.9 896.4 C1738.1 896.3 1742.3 896.5 1744.4 896.1 C1747.1 895.6 1752.3 893.2 1754.9 893.1 C1757.1 893.0 1761.6 894.8 1763.8 895.4 C1766.1 895.9 1770.6 897.7 1772.8 897.6 C1775.8 897.5 1781.8 895.0 1784.8 894.6 C1787.3 894.3 1792.3 894.6 1794.8 894.6 C1797.3 894.6 1802.3 894.6 1804.8 894.6 C1807.3 894.6 1812.3 894.7 1814.8 894.6 C1818.2 894.5 1824.9 893.6 1828.2 893.9 C1830.5 894.1 1834.8 896.1 1837.0 896.9" stroke="rgba(255,20,20,0.85)" stroke-width="2"/>
<path d="M190.2 806.6 C192.4 806.6 196.8 806.6 199.1 806.6 C201.3 806.6 205.7 806.7 207.9 806.7 C210.1 806.7 214.6 806.7 216.8 806.7 C219.0 806.7 223.4 806.7 225.6 806.7 C227.8 806.7 232.3 806.7 234.5 806.8 C236.7 806.8 241.1 806.8 243.3 806.8 C245.5 806.8 250.0 806.8 252.2 806.8 C254.4 806.8 258.8 806.8 261.0 806.8 C263.3 806.8 267.7 806.9 269.9 806.9 C272.1 806.9 276.5 806.9 278.8 806.9 C281.1 806.9 285.8 806.9 288.1 806.9 C290.5 806.9 295.2 806.9 297.5 806.9 C299.9 806.9 304.6 807.2 306.9 806.9 C309.5 806.5 314.5 804.7 317.0 804.0 C319.6 803.3 324.8 800.8 327.2 801.1 C329.7 801.4 334.1 805.8 336.6 806.6 C338.6 807.2 343.0 806.7 345.2 806.8 C347.3 806.8 351.7 807.3 353.8 806.9 C356.9 806.3 363.1 803.5 366.2 802.7 C368.2 802.2 372.1 801.9 374.1 801.7 C376.0 801.4 381.6 798.8 381.9 800.6 C385.9 821.8 387.0 872.3 391.2 893.5 C391.7 895.6 398.1 893.5 400.4 893.5 C402.7 893.5 407.3 893.5 409.5 893.5 C411.8 893.5 416.4 893.5 418.7 893.5 C421.0 893.5 425.6 893.5 427.8 893.5 C430.1 893.5 434.7 893.5 437.0 893.5 C439.3 893.5 443.9 893.5 446.1 893.5 C448.4 893.5 453.0 893.5 455.3 893.5 C457.6 893.5 462.2 893.5 464.4 893.5 C466.7 893.5 471.3 893.5 473.6 893.5 C475.9 893.5 480.5 893.5 482.7 893.5 C485.0 893.5 489.6 893.5 491.9 893.5 C494.2 893.5 498.8 893.5 501.0 893.5 C503.3 893.5 507.9 893.5 510.2 893.5 C512.5 893.5 517.1 893.5 519.3 893.5 C521.6 893.5 526.2 893.5 528.5 893.5 C530.8 893.5 535.4 893.5 537.6 893.5 C539.9 893.5 544.5 893.5 546.8 893.5 C549.1 893.5 553.6 893.5 555.9 893.5 C558.2 893.5 562.8 893.5 565.1 893.5 C567.4 893.5 571.9 893.5 574.2 893.5 C576.5 893.5 581.1 893.5 583.4 893.5 C585.7 893.5 590.2 893.5 592.5 893.5 C594.8 893.5 599.4 893.5 601.7 893.5 C604.0 893.5 608.5 893.5 610.8 893.5 C613.1 893.5 617.7 893.5 620.0 893.5 C622.3 893.5 626.8 893.5 629.1 893.5 C631.4 893.5 636.0 893.5 638.3 893.5 C640.6 893.5 645.1 893.5 647.4 893.5 C649.7 893.5 654.3 893.5 656.6 893.5 C658.9 893.5 663.4 893.5 665.7 893.5 C668.0 893.5 672.6 893.5 674.9 893.5 C677.2 893.5 681.7 893.5 684.0 893.5 C686.3 893.5 690.9 893.5 693.2 893.5 C695.5 893.5 700.0 893.5 702.3 893.5 C704.6 893.5 709.2 893.5 711.5 893.5 C713.8 893.5 718.3 893.5 720.6 893.5 C722.9 893.5 727.5 893.5 729.8 893.5 C732.1 893.5 736.6 893.5 738.9 893.5 C741.2 893.5 745.8 893.5 748.1 893.5 C750.4 893.5 754.9 893.5 757.2 893.5 C759.5 893.5 764.1 893.5 766.4 893.5 C768.7 893.5 773.2 893.5 775.5 893.5 C777.8 893.5 782.4 893.5 784.7 893.5 C787.0 893.5 791.5 893.5 793.8 893.5 C796.1 893.5 800.7 893.5 803.0 893.5 C805.3 893.5 809.8 893.5 812.1 893.5 C814.4 893.5 819.0 893.5 821.3 893.5 C823.6 893.5 828.1 893.5 830.4 893.5 C832.7 893.5 837.3 893.5 839.6 893.5 C841.8 893.5 846.4 893.5 848.7 893.5 C851.0 893.5 855.6 893.5 857.9 893.5 C860.1 893.5 864.7 893.5 867.0 893.5 C869.3 893.5 873.9 893.5 876.2 893.5 C878.4 893.5 883.0 893.5 885.3 893.5 C887.6 893.5 892.2 893.5 894.5 893.5 C896.7 893.5 901.3 893.5 903.6 893.5 C905.9 893.5 910.5 893.5 912.8 893.5 C915.0 893.5 919.6 893.5 921.9 893.5 C924.2 893.5 928.8 893.5 931.1 893.5 C933.3 893.5 937.9 893.5 940.2 893.5 C942.5 893.5 947.1 893.5 949.4 893.5 C951.6 893.5 956.2 893.5 958.5 893.5 C960.8 893.5 965.4 893.5 967.7 893.5 C969.9 893.5 974.5 893.5 976.8 893.5 C979.1 893.5 983.7 893.5 985.9 893.5 C988.2 893.5 992.8 893.5 995.1 893.5 C997.4 893.5 1002.0 893.5 1004.2 893.5 C1006.5 893.5 1011.1 893.5 1013.4 893.5 C1015.7 893.5 1020.3 893.5 1022.5 893.5 C1024.8 893.5 1029.4 893.5 1031.7 893.5 C1034.0 893.5 1038.6 893.5 1040.8 893.5 C1043.1 893.5 1047.7 893.5 1050.0 893.5 C1052.3 893.5 1056.9 893.5 1059.1 893.5 C1061.4 893.5 1066.0 893.5 1068.3 893.5 C1070.6 893.5 1075.2 893.5 1077.4 893.5 C1079.7 893.5 1084.3 893.5 1086.6 893.5 C1088.9 893.5 1093.5 893.5 1095.7 893.5 C1098.0 893.5 1102.6 893.5 1104.9 893.5 C1107.2 893.5 1111.8 893.5 1114.0 893.5 C1116.3 893.5 1120.9 893.5 1123.2 893.5 C1125.5 893.5 1130.0 893.5 1132.3 893.5 C1134.6 893.5 1139.2 893.5 1141.5 893.5 C1143.8 893.5 1148.3 893.5 1150.6 893.5 C1152.9 893.5 1157.5 893.5 1159.8 893.5 C1162.1 893.5 1166.6 893.5 1168.9 893.5 C1171.2 893.5 1175.8 893.5 1178.1 893.5 C1180.4 893.5 1184.9 893.5 1187.2 893.5 C1189.5 893.5 1194.1 893.5 1196.4 893.5 C1198.7 893.5 1203.2 893.5 1205.5 893.5 C1207.8 893.5 1212.4 893.5 1214.7 893.5 C1217.0 893.5 1221.5 893.5 1223.8 893.5 C1226.1 893.5 1230.7 893.5 1233.0 893.5 C1235.3 893.5 1239.8 893.5 1242.1 893.5 C1244.4 893.5 1249.0 893.5 1251.3 893.5 C1253.6 893.5 1258.1 893.5 1260.4 893.5 C1262.7 893.5 1267.3 893.5 1269.6 893.5 C1271.9 893.5 1276.4 893.5 1278.7 893.5 C1281.0 893.5 1285.6 893.5 1287.9 893.5 C1290.2 893.5 1294.7 893.5 1297.0 893.5 C1299.3 893.5 1303.9 893.5 1306.2 893.5 C1308.5 893.5 1313.0 893.5 1315.3 893.5 C1317.6 893.5 1322.2 893.5 1324.5 893.5 C1326.8 893.5 1331.3 893.5 1333.6 893.5 C1335.9 893.5 1340.5 893.5 1342.8 893.5 C1345.1 893.5 1349.6 893.5 1351.9 893.5 C1354.2 893.5 1358.8 893.5 1361.1 893.5 C1363.4 893.5 1367.9 893.5 1370.2 893.5 C1372.5 893.5 1377.1 893.5 1379.4 893.5 C1381.7 893.5 1386.2 893.5 1388.5 893.5 C1390.8 893.5 1395.4 893.5 1397.7 893.5 C1400.0 893.5 1404.5 893.5 1406.8 893.5 C1409.1 893.5 1413.7 893.5 1416.0 893.5 C1418.3 893.5 1422.8 893.5 1425.1 893.5 C1427.4 893.5 1432.0 893.5 1434.3 893.5 C1436.5 893.5 1441.1 893.5 1443.4 893.5 C1445.7 893.5 1450.3 893.5 1452.6 893.5 C1454.8 893.5 1459.4 893.5 1461.7 893.5 C1464.0 893.5 1468.6 893.5 1470.9 893.5 C1473.1 893.5 1477.7 893.5 1480.0 893.5 C1482.3 893.5 1486.9 893.5 1489.2 893.5 C1491.4 893.5 1496.0 893.5 1498.3 893.5 C1500.6 893.5 1505.2 893.5 1507.5 893.5 C1509.7 893.5 1514.3 893.5 1516.6 893.5 C1518.9 893.5 1523.5 893.5 1525.8 893.5 C1528.0 893.5 1532.6 893.5 1534.9 893.5 C1537.2 893.5 1541.8 893.5 1544.1 893.5 C1546.3 893.5 1550.9 893.5 1553.2 893.5 C1555.5 893.5 1560.1 893.5 1562.4 893.5 C1564.6 893.5 1569.8 894.5 1571.5 893.5 C1573.4 892.4 1576.3 887.4 1577.0 885.0 C1578.5 880.2 1579.8 869.8 1580.4 864.7 C1581.8 853.5 1584.1 831.0 1584.9 819.8 C1586.5 797.3 1587.1 750.7 1590.2 729.9 C1590.5 728.0 1596.8 728.5 1598.4 729.2 C1599.5 729.7 1600.6 733.0 1600.7 734.4 C1603.2 774.1 1605.5 871.0 1608.9 893.5 C1609.8 899.8 1616.8 860.8 1617.9 849.7 C1621.3 817.3 1622.7 749.0 1626.9 719.5 C1627.2 717.3 1633.5 722.7 1635.8 723.2 C1638.0 723.6 1643.8 721.5 1644.8 723.2 C1648.3 729.0 1650.3 747.4 1653.8 753.1 C1654.9 754.8 1660.9 752.9 1663.3 752.9 C1665.6 752.8 1670.4 752.7 1672.7 752.6 C1675.1 752.6 1679.9 752.2 1682.2 752.4 C1684.5 752.6 1688.9 754.4 1691.2 754.6 C1693.3 754.8 1697.5 754.3 1699.6 754.2 C1701.7 754.1 1705.9 753.9 1708.1 753.9 C1710.2 753.8 1714.4 753.6 1716.5 753.5 C1718.6 753.4 1722.8 752.8 1724.9 753.1 C1727.9 753.5 1733.9 756.0 1736.9 756.1 C1739.1 756.2 1743.6 753.9 1745.9 753.9 C1748.1 753.9 1752.7 755.3 1754.9 755.8 C1757.2 756.2 1761.7 757.8 1763.9 757.6 C1766.2 757.4 1770.5 754.1 1772.8 753.9 C1775.4 753.7 1780.7 756.2 1783.3 756.1 C1785.9 756.0 1791.1 753.6 1793.8 753.1 C1795.6 752.8 1799.4 752.8 1801.3 752.8 C1803.2 752.7 1807.1 751.8 1808.8 752.4 C1811.4 753.3 1817.2 760.0 1818.5 758.4 C1822.0 754.2 1825.8 729.4 1828.2 729.2 C1830.4 729.0 1834.8 750.0 1837.0 756.9" stroke="rgba(0,0,255,0.72)" stroke-width="4.5"/>
</g><line x1="189" y1="1104" x2="1838" y2="1104" stroke="#8c8c8c" stroke-width="2.5"/><g font-size="24" fill="#999"><text x="169.5" y="549.5" text-anchor="end">5</text><text x="169.5" y="619.5" text-anchor="end">4</text><text x="169.5" y="689.5" text-anchor="end">3</text><text x="169.5" y="759.5" text-anchor="end">2</text><text x="169.5" y="829.5" text-anchor="end">1</text><text x="169.5" y="899.5" text-anchor="end">0</text><text x="169.5" y="969.5" text-anchor="end">-1</text><text x="169.5" y="1039.5" text-anchor="end">-2</text><text x="169.5" y="1109.5" text-anchor="end">-3</text><text x="1858" y="550.0">100</text><text x="1858" y="606.1">90</text><text x="1858" y="662.2">80</text><text x="1858" y="718.3">70</text><text x="1858" y="774.4">60</text><text x="1858" y="830.5">50</text><text x="1858" y="886.6">40</text><text x="1858" y="942.7">30</text><text x="1858" y="998.8">20</text><text x="1858" y="1054.9">10</text><text x="1858" y="1111.0">0</text><text transform="translate(190.5 1126) rotate(-45) scale(0.95 1)" text-anchor="end" dy="8">08:52</text><text transform="translate(282.0 1126) rotate(-45) scale(0.95 1)" text-anchor="end" dy="8">08:54</text><text transform="translate(373.5 1126) rotate(-45) scale(0.95 1)" text-anchor="end" dy="8">08:56</text><text transform="translate(465.0 1126) rotate(-45) scale(0.95 1)" text-anchor="end" dy="8">08:57</text><text transform="translate(556.5 1126) rotate(-45) scale(0.95 1)" text-anchor="end" dy="8">08:59</text><text transform="translate(648.0 1126) rotate(-45) scale(0.95 1)" text-anchor="end" dy="8">09:00</text><text transform="translate(739.5 1126) rotate(-45) scale(0.95 1)" text-anchor="end" dy="8">09:02</text><text transform="translate(831.0 1126) rotate(-45) scale(0.95 1)" text-anchor="end" dy="8">09:04</text><text transform="translate(922.5 1126) rotate(-45) scale(0.95 1)" text-anchor="end" dy="8">09:05</text><text transform="translate(1014.0 1126) rotate(-45) scale(0.95 1)" text-anchor="end" dy="8">09:07</text><text transform="translate(1105.5 1126) rotate(-45) scale(0.95 1)" text-anchor="end" dy="8">09:09</text><text transform="translate(1197.0 1126) rotate(-45) scale(0.95 1)" text-anchor="end" dy="8">09:10</text><text transform="translate(1288.5 1126) rotate(-45) scale(0.95 1)" text-anchor="end" dy="8">09:12</text><text transform="translate(1380.0 1126) rotate(-45) scale(0.95 1)" text-anchor="end" dy="8">09:14</text><text transform="translate(1471.5 1126) rotate(-45) scale(0.95 1)" text-anchor="end" dy="8">09:15</text><text transform="translate(1563.0 1126) rotate(-45) scale(0.95 1)" text-anchor="end" dy="8">09:17</text><text transform="translate(1654.5 1126) rotate(-45) scale(0.95 1)" text-anchor="end" dy="8">09:19</text><text transform="translate(1746.0 1126) rotate(-45) scale(0.95 1)" text-anchor="end" dy="8">09:21</text><text transform="translate(1837.5 1126) rotate(-45) scale(0.95 1)" text-anchor="end" dy="8">09:22</text><text transform="translate(121.5 823) rotate(-90)" text-anchor="middle">Leistung [kW]</text><text transform="translate(1926 824) rotate(90) scale(0.91 1)" text-anchor="middle">SoC [%]</text></g>
<rect x="441.5" y="498.5" width="81" height="25" fill="rgba(0,0,255,0.7)" stroke="rgba(0,0,230,0.8)" stroke-width="4"/>
<rect x="594.5" y="499" width="80" height="24" fill="rgba(255,0,0,0.3)" stroke="rgba(255,30,30,0.85)" stroke-width="2.5"/>
<rect x="751" y="499" width="79" height="24" fill="rgba(0,255,0,0.3)" stroke="rgba(30,240,30,0.95)" stroke-width="2.5"/>
<rect x="893" y="499" width="80" height="24" fill="rgba(200,255,13,0.3)" stroke="rgba(255,165,40,0.95)" stroke-width="2.5"/>
<rect x="1098" y="499" width="80" height="24" fill="rgba(255,150,0,0.7)" stroke="rgba(255,150,0,0.7)" stroke-width="4" stroke-dasharray="20 10"/>
<rect x="1351.5" y="498.5" width="81" height="25" fill="rgba(0,0,0,0.7)" stroke="rgba(0,0,0,0.8)" stroke-width="4"/>
</svg>
</body></html>
